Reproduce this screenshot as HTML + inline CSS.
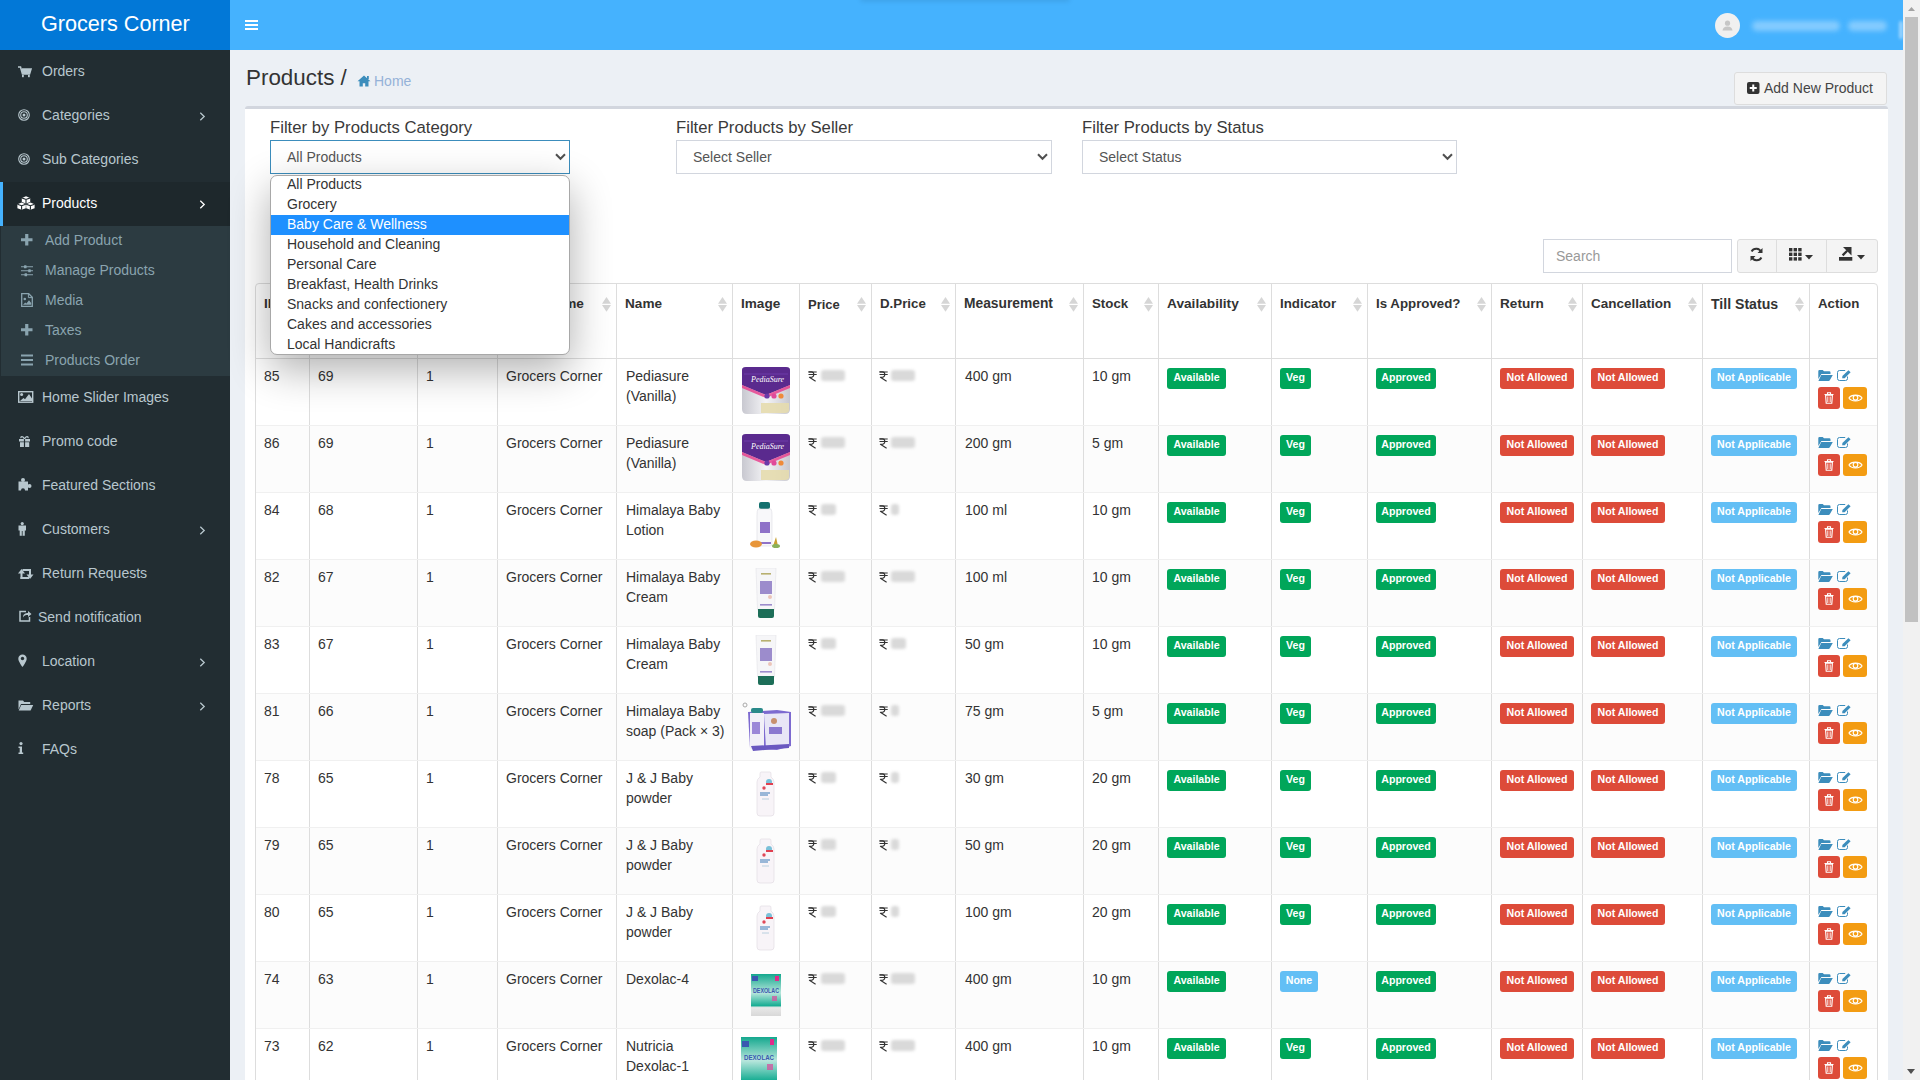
<!DOCTYPE html>
<html><head><meta charset="utf-8"><title>Products</title>
<style>
*{box-sizing:border-box}
html,body{margin:0;padding:0}
body{width:1920px;height:1080px;overflow:hidden;position:relative;background:#ecf0f5;font-family:"Liberation Sans",sans-serif;}
.t{position:absolute;white-space:nowrap}
.r{position:absolute;display:block}
</style></head>
<body>
<div class="r" style="left:0px;top:0px;width:230px;height:50px;background:#0278d7;"></div>
<div class="t" style="left:41px;top:13.32px;font-size:21.6px;line-height:21.6px;color:#fff;font-weight:normal;">Grocers Corner</div>
<div class="r" style="left:230px;top:0px;width:1673px;height:50px;background:#45b2fe;"></div>
<div class="r" style="left:860px;top:-4px;width:210px;height:6px;background:rgba(0,0,0,.08);border-radius:4px;filter:blur(2px)"></div>
<div class="r" style="left:245px;top:20px;width:13px;height:2px;background:#fff;"></div>
<div class="r" style="left:245px;top:24px;width:13px;height:2px;background:#fff;"></div>
<div class="r" style="left:245px;top:28px;width:13px;height:2px;background:#fff;"></div>
<div class="r" style="left:1715px;top:13px;width:25px;height:25px;background:#f0f0f0;border-radius:50%"></div>
<svg class="r" style="left:1721px;top:19px;" width="13" height="13" viewBox="0 0 13 13"><circle cx="6.5" cy="4.2" r="2.6" fill="#c6c6c6"/><path d="M1.5 11.5 Q2 7.6 6.5 7.6 Q11 7.6 11.5 11.5Z" fill="#c6c6c6"/></svg>
<div class="r" style="left:1752px;top:21px;width:88px;height:10px;background:#8fd0ff;border-radius:5px;filter:blur(2.5px);opacity:.85"></div>
<div class="r" style="left:1848px;top:21px;width:39px;height:10px;background:#8fd0ff;border-radius:5px;filter:blur(2.5px);opacity:.85"></div>
<div class="r" style="left:0px;top:50px;width:230px;height:1030px;background:#222d32;"></div>
<svg class="r" style="left:18px;top:66px;" width="14" height="12" viewBox="0 0 14 12"><path d="M0 1h2.5l2 7h7l1.5-5H4" fill="none" stroke="#b8c7ce" stroke-width="1.6"/><path d="M3.5 3h9.5l-1.5 5h-7z" fill="#b8c7ce"/><rect x="4" y="9" width="1.8" height="2.2" fill="#b8c7ce"/><rect x="10" y="9" width="1.8" height="2.2" fill="#b8c7ce"/></svg>
<div class="t" style="left:42px;top:64.15px;font-size:14px;line-height:14px;color:#b8c7ce;font-weight:normal;">Orders</div>
<svg class="r" style="left:18px;top:109px;" width="12" height="12" viewBox="0 0 12 12"><circle cx="6" cy="6" r="5.3" fill="none" stroke="#b8c7ce" stroke-width="1.1"/><circle cx="6" cy="6" r="3.3" fill="none" stroke="#b8c7ce" stroke-width="1.1"/><circle cx="6" cy="6" r="1.5" fill="#b8c7ce"/></svg>
<div class="t" style="left:42px;top:108.15px;font-size:14px;line-height:14px;color:#b8c7ce;font-weight:normal;">Categories</div>
<svg class="r" style="left:199px;top:112px;" width="7" height="9" viewBox="0 0 7 9"><path d="M1.3 0.8 L5.2 4.5 L1.3 8.2" stroke="#b8c7ce" stroke-width="1.3" fill="none"/></svg>
<svg class="r" style="left:18px;top:153px;" width="12" height="12" viewBox="0 0 12 12"><circle cx="6" cy="6" r="5.3" fill="none" stroke="#b8c7ce" stroke-width="1.1"/><circle cx="6" cy="6" r="3.3" fill="none" stroke="#b8c7ce" stroke-width="1.1"/><circle cx="6" cy="6" r="1.5" fill="#b8c7ce"/></svg>
<div class="t" style="left:42px;top:152.15px;font-size:14px;line-height:14px;color:#b8c7ce;font-weight:normal;">Sub Categories</div>
<div class="r" style="left:0px;top:182px;width:230px;height:44px;background:#1e282c;"></div>
<div class="r" style="left:0px;top:182px;width:3px;height:44px;background:#45b2fe;"></div>
<svg class="r" style="left:17px;top:196px;" width="18" height="14" viewBox="0 0 18 14"><path d="M9 0.3L13.2 1.8840000000000001L13.2 5.916L9 7.5L4.8 5.916L4.8 1.8840000000000001Z" fill="#fff"/><path d="M4.6 6.6L8.8 8.184L8.8 12.216000000000001L4.6 13.8L0.39999999999999947 12.216000000000001L0.39999999999999947 8.184Z" fill="#fff"/><path d="M13.4 6.6L17.6 8.184L17.6 12.216000000000001L13.4 13.8L9.2 12.216000000000001L9.2 8.184Z" fill="#fff"/><path d="M4.8 1.8840000000000001L9 3.468L13.2 1.8840000000000001M9 3.468L9 7.5" stroke="#1e282c" stroke-width="1.1" fill="none"/><path d="M0.39999999999999947 8.184L4.6 9.768L8.8 8.184M4.6 9.768L4.6 13.8" stroke="#1e282c" stroke-width="1.1" fill="none"/><path d="M9.2 8.184L13.4 9.768L17.6 8.184M13.4 9.768L13.4 13.8" stroke="#1e282c" stroke-width="1.1" fill="none"/></svg>
<div class="t" style="left:42px;top:196.15px;font-size:14px;line-height:14px;color:#fff;font-weight:normal;">Products</div>
<svg class="r" style="left:199px;top:200px;" width="7" height="9" viewBox="0 0 7 9"><path d="M1.3 0.8 L5.2 4.5 L1.3 8.2" stroke="#fff" stroke-width="1.3" fill="none"/></svg>
<div class="r" style="left:1px;top:226px;width:229px;height:150px;background:#2c3b41;"></div>
<svg class="r" style="left:21px;top:234px;" width="12" height="12" viewBox="0 0 12 12"><path d="M5.75 0v11.5M0 5.75h11.5" stroke="#8aa4af" stroke-width="3.2"/></svg>
<div class="t" style="left:45px;top:233.15px;font-size:14px;line-height:14px;color:#8aa4af;font-weight:normal;">Add Product</div>
<svg class="r" style="left:21px;top:265px;" width="12" height="12" viewBox="0 0 12 12"><path d="M0 1.8h12M0 5.8h12M0 9.8h12" stroke="#8aa4af" stroke-width="1.1"/><rect x="3" y="0.3" width="2.6" height="3" rx=".6" fill="#8aa4af"/><rect x="7.2" y="4.3" width="2.6" height="3" rx=".6" fill="#8aa4af"/><rect x="3.5" y="8.3" width="2.6" height="3" rx=".6" fill="#8aa4af"/></svg>
<div class="t" style="left:45px;top:263.15px;font-size:14px;line-height:14px;color:#8aa4af;font-weight:normal;">Manage Products</div>
<svg class="r" style="left:21px;top:293px;" width="12" height="14" viewBox="0 0 12 14"><path d="M0.7 0.7h7l3.6 3.6v9.2H0.7z" fill="none" stroke="#8aa4af" stroke-width="1.3"/><path d="M7.4 0.7v3.9h3.9" fill="none" stroke="#8aa4af" stroke-width="1"/><circle cx="3.8" cy="6" r="1.3" fill="#8aa4af"/><path d="M2 11.8l2.2-2.4 1.2 1 2.6-3.2 2.2 2.8v1.8z" fill="#8aa4af"/></svg>
<div class="t" style="left:45px;top:293.15px;font-size:14px;line-height:14px;color:#8aa4af;font-weight:normal;">Media</div>
<svg class="r" style="left:21px;top:324px;" width="12" height="12" viewBox="0 0 12 12"><path d="M5.75 0v11.5M0 5.75h11.5" stroke="#8aa4af" stroke-width="3.2"/></svg>
<div class="t" style="left:45px;top:323.15px;font-size:14px;line-height:14px;color:#8aa4af;font-weight:normal;">Taxes</div>
<svg class="r" style="left:21px;top:354px;" width="12" height="12" viewBox="0 0 12 12"><path d="M0 1.5h12M0 6h12M0 10.5h12" stroke="#8aa4af" stroke-width="1.9"/></svg>
<div class="t" style="left:45px;top:353.15px;font-size:14px;line-height:14px;color:#8aa4af;font-weight:normal;">Products Order</div>
<svg class="r" style="left:18px;top:391px;" width="16" height="12" viewBox="0 0 16 12"><rect x="0.7" y="0.7" width="14" height="10.5" fill="none" stroke="#b8c7ce" stroke-width="1.4"/><circle cx="3.6" cy="3.4" r="1.5" fill="#b8c7ce"/><path d="M2 10l3.5-3 1.5 1.2 4-5.2 3 4.5V10z" fill="#b8c7ce"/></svg>
<div class="t" style="left:42px;top:390.15px;font-size:14px;line-height:14px;color:#b8c7ce;font-weight:normal;">Home Slider Images</div>
<svg class="r" style="left:18px;top:435px;" width="13" height="13" viewBox="0 0 13 13"><path d="M1 4h11v2.5H1zM2 7.2h9.2V12H2z" fill="#b8c7ce"/><path d="M6.5 4v8" stroke="#222d32" stroke-width="1.2"/><path d="M6.5 4C5 1 2.5 1 3 3.2M6.5 4C8 1 10.5 1 10 3.2" stroke="#b8c7ce" stroke-width="1.3" fill="none"/></svg>
<div class="t" style="left:42px;top:434.15px;font-size:14px;line-height:14px;color:#b8c7ce;font-weight:normal;">Promo code</div>
<svg class="r" style="left:18px;top:478px;" width="14" height="13" viewBox="0 0 14 13"><rect x="0.5" y="3.5" width="9.5" height="9" fill="#b8c7ce"/><circle cx="5" cy="2" r="2" fill="#b8c7ce"/><circle cx="11.5" cy="8" r="2" fill="#b8c7ce"/><circle cx="5" cy="12.3" r="2" fill="#222d32"/></svg>
<div class="t" style="left:42px;top:478.15px;font-size:14px;line-height:14px;color:#b8c7ce;font-weight:normal;">Featured Sections</div>
<svg class="r" style="left:18px;top:522px;" width="9" height="14" viewBox="0 0 9 14"><circle cx="4.25" cy="1.6" r="1.6" fill="#b8c7ce"/><path d="M0.5 3.6h7.5v5h-1.2v5.2H1.7V8.6H0.5z" fill="#b8c7ce"/><path d="M4.25 9v4.8" stroke="#222d32" stroke-width=".8"/></svg>
<div class="t" style="left:42px;top:522.15px;font-size:14px;line-height:14px;color:#b8c7ce;font-weight:normal;">Customers</div>
<svg class="r" style="left:199px;top:526px;" width="7" height="9" viewBox="0 0 7 9"><path d="M1.3 0.8 L5.2 4.5 L1.3 8.2" stroke="#b8c7ce" stroke-width="1.3" fill="none"/></svg>
<svg class="r" style="left:18px;top:569px;" width="16" height="10" viewBox="0 0 16 10"><path d="M0 4.5L3.5 0 7 4.5z" fill="#b8c7ce"/><rect x="2.5" y="4" width="2" height="6" fill="#b8c7ce"/><rect x="2.5" y="8" width="8.5" height="2" fill="#b8c7ce"/><rect x="4.5" y="0" width="8.5" height="2" fill="#b8c7ce"/><rect x="11" y="0" width="2" height="6" fill="#b8c7ce"/><path d="M8.5 5.5h7L12 10z" fill="#b8c7ce"/></svg>
<div class="t" style="left:42px;top:566.15px;font-size:14px;line-height:14px;color:#b8c7ce;font-weight:normal;">Return Requests</div>
<svg class="r" style="left:18px;top:609px;" width="14" height="13" viewBox="0 0 14 13"><path d="M8 2.5H2v9.5h9.5V8" fill="none" stroke="#b8c7ce" stroke-width="1.5"/><path d="M5 8.5c0-3.5 2.5-4.5 5-4.5V2l3.5 3-3.5 3V6c-2.5 0-4 .5-5 2.5z" fill="#b8c7ce"/></svg>
<div class="t" style="left:38px;top:610.15px;font-size:14px;line-height:14px;color:#b8c7ce;font-weight:normal;">Send notification</div>
<svg class="r" style="left:18px;top:654px;" width="9" height="14" viewBox="0 0 9 14"><path d="M4.5 0.5a4.2 4.2 0 0 1 4.2 4.2c0 2.8-4.2 8.3-4.2 8.3S0.3 7.5 0.3 4.7A4.2 4.2 0 0 1 4.5 0.5z" fill="#b8c7ce"/><circle cx="4.5" cy="4.5" r="1.7" fill="#222d32"/></svg>
<div class="t" style="left:42px;top:654.15px;font-size:14px;line-height:14px;color:#b8c7ce;font-weight:normal;">Location</div>
<svg class="r" style="left:199px;top:658px;" width="7" height="9" viewBox="0 0 7 9"><path d="M1.3 0.8 L5.2 4.5 L1.3 8.2" stroke="#b8c7ce" stroke-width="1.3" fill="none"/></svg>
<svg class="r" style="left:18px;top:699px;" width="16" height="12" viewBox="0 0 16 12"><path d="M0.5 1.5h4.5l1.2 1.5h6v2H3L0.5 10.5z" fill="#b8c7ce"/><path d="M3.2 6h12l-2.6 5.5H0.7z" fill="#b8c7ce"/></svg>
<div class="t" style="left:42px;top:698.15px;font-size:14px;line-height:14px;color:#b8c7ce;font-weight:normal;">Reports</div>
<svg class="r" style="left:199px;top:702px;" width="7" height="9" viewBox="0 0 7 9"><path d="M1.3 0.8 L5.2 4.5 L1.3 8.2" stroke="#b8c7ce" stroke-width="1.3" fill="none"/></svg>
<svg class="r" style="left:18px;top:742px;" width="6" height="13" viewBox="0 0 6 13"><circle cx="3" cy="1.6" r="1.6" fill="#b8c7ce"/><path d="M0.5 4.5h3.5v6h1.2v1.6H0.5v-1.6h1.2V6.1H0.5z" fill="#b8c7ce"/></svg>
<div class="t" style="left:42px;top:742.15px;font-size:14px;line-height:14px;color:#b8c7ce;font-weight:normal;">FAQs</div>
<div class="t" style="left:246px;top:67.04px;font-size:22.4px;line-height:22.4px;color:#333;font-weight:normal;">Products /</div>
<svg class="r" style="left:357px;top:75px;" width="14" height="12" viewBox="0 0 14 12"><path d="M7 0.5L0.5 6.3h2v5.2h3.3V8.3h2.4v3.2h3.3V6.3h2z" fill="#3c8dbc"/><rect x="10" y="1" width="1.8" height="3" fill="#3c8dbc"/></svg>
<div class="t" style="left:374px;top:74.15px;font-size:14px;line-height:14px;color:#95b2d8;font-weight:normal;">Home</div>
<div class="r" style="left:1734px;top:72px;width:153px;height:33px;background:#f4f4f4;border:1px solid #ddd;border-radius:3px"></div>
<svg class="r" style="left:1747px;top:82px;" width="13" height="12" viewBox="0 0 13 12"><rect x="0" y="0" width="12.5" height="12" rx="2" fill="#333"/><path d="M6.25 2.5v7M2.75 6h7" stroke="#fff" stroke-width="2"/></svg>
<div class="t" style="left:1764px;top:81.15px;font-size:14px;line-height:14px;color:#444;font-weight:normal;">Add New Product</div>
<div class="r" style="left:245px;top:106px;width:1643px;height:974px;background:#fff;border-top:3px solid #d2d6de;border-radius:3px 3px 0 0"></div>
<div class="t" style="left:270px;top:119.86px;font-size:16.7px;line-height:16.7px;color:#3a3a3a;font-weight:normal;">Filter by Products Category</div>
<div class="t" style="left:676px;top:119.86px;font-size:16.7px;line-height:16.7px;color:#3a3a3a;font-weight:normal;">Filter Products by Seller</div>
<div class="t" style="left:1082px;top:119.86px;font-size:16.7px;line-height:16.7px;color:#3a3a3a;font-weight:normal;">Filter Products by Status</div>
<div class="r" style="left:270px;top:140px;width:300px;height:34px;background:#fff;border:1px solid #3c8dbc"></div>
<div class="t" style="left:287px;top:150.15px;font-size:14px;line-height:14px;color:#555;font-weight:normal;">All Products</div>
<svg class="r" style="left:554.5px;top:153px;" width="11" height="8" viewBox="0 0 11 8"><path d="M1 1.2L5.5 5.8 10 1.2" stroke="#505050" stroke-width="2" fill="none"/></svg>
<div class="r" style="left:676px;top:140px;width:376px;height:34px;background:#fff;border:1px solid #d2d6de"></div>
<div class="t" style="left:693px;top:150.15px;font-size:14px;line-height:14px;color:#555;font-weight:normal;">Select Seller</div>
<svg class="r" style="left:1037px;top:153px;" width="11" height="8" viewBox="0 0 11 8"><path d="M1 1.2L5.5 5.8 10 1.2" stroke="#505050" stroke-width="2" fill="none"/></svg>
<div class="r" style="left:1082px;top:140px;width:375px;height:34px;background:#fff;border:1px solid #d2d6de"></div>
<div class="t" style="left:1099px;top:150.15px;font-size:14px;line-height:14px;color:#555;font-weight:normal;">Select Status</div>
<svg class="r" style="left:1442px;top:153px;" width="11" height="8" viewBox="0 0 11 8"><path d="M1 1.2L5.5 5.8 10 1.2" stroke="#505050" stroke-width="2" fill="none"/></svg>
<div class="r" style="left:1543px;top:239px;width:189px;height:34px;background:#fff;border:1px solid #d2d6de"></div>
<div class="t" style="left:1556px;top:249.15px;font-size:14px;line-height:14px;color:#999;font-weight:normal;">Search</div>
<div class="r" style="left:1737px;top:239px;width:141px;height:34px;background:#f4f4f4;border:1px solid #ddd;border-radius:3px"></div>
<div class="r" style="left:1776px;top:240px;width:1px;height:32px;background:#ddd;"></div>
<div class="r" style="left:1826px;top:240px;width:1px;height:32px;background:#ddd;"></div>
<svg class="r" style="left:1749px;top:247px;" width="15" height="15" viewBox="0 0 15 15"><path d="M12.2 5.2A5.3 5.3 0 0 0 2.6 4.5M2.8 9.8A5.3 5.3 0 0 0 12.4 10.5" stroke="#333" stroke-width="2" fill="none"/><path d="M13.5 1v5h-5zM1.5 14V9h5z" fill="#333"/></svg>
<svg class="r" style="left:1789px;top:248px;" width="13" height="13" viewBox="0 0 13 13"><rect x="0" y="0" width="3.4" height="3.4" fill="#333"/><rect x="0" y="4.6" width="3.4" height="3.4" fill="#333"/><rect x="0" y="9.2" width="3.4" height="3.4" fill="#333"/><rect x="4.6" y="0" width="3.4" height="3.4" fill="#333"/><rect x="4.6" y="4.6" width="3.4" height="3.4" fill="#333"/><rect x="4.6" y="9.2" width="3.4" height="3.4" fill="#333"/><rect x="9.2" y="0" width="3.4" height="3.4" fill="#333"/><rect x="9.2" y="4.6" width="3.4" height="3.4" fill="#333"/><rect x="9.2" y="9.2" width="3.4" height="3.4" fill="#333"/></svg>
<svg class="r" style="left:1805px;top:255px;" width="8" height="5" viewBox="0 0 8 5"><path d="M0 0h8L4 4.5z" fill="#333"/></svg>
<svg class="r" style="left:1839px;top:246px;" width="14" height="15" viewBox="0 0 14 15"><rect x="0" y="11" width="13.3" height="3.7" fill="#333"/><path d="M3.6 9.4L8.2 4.8" stroke="#333" stroke-width="2.3"/><path d="M4 1h8.5v8.5z" fill="#333"/></svg>
<svg class="r" style="left:1857px;top:255px;" width="8" height="5" viewBox="0 0 8 5"><path d="M0 0h8L4 4.5z" fill="#333"/></svg>
<div class="r" style="left:255px;top:283px;width:1623px;height:807px;background:#fff;border:1px solid #ddd;border-radius:4px"></div>
<div class="r" style="left:309px;top:284px;width:1px;height:797px;background:#ddd;"></div>
<div class="r" style="left:417px;top:284px;width:1px;height:797px;background:#ddd;"></div>
<div class="r" style="left:497px;top:284px;width:1px;height:797px;background:#ddd;"></div>
<div class="r" style="left:616px;top:284px;width:1px;height:797px;background:#ddd;"></div>
<div class="r" style="left:732px;top:284px;width:1px;height:797px;background:#ddd;"></div>
<div class="r" style="left:799px;top:284px;width:1px;height:797px;background:#ddd;"></div>
<div class="r" style="left:871px;top:284px;width:1px;height:797px;background:#ddd;"></div>
<div class="r" style="left:955px;top:284px;width:1px;height:797px;background:#ddd;"></div>
<div class="r" style="left:1083px;top:284px;width:1px;height:797px;background:#ddd;"></div>
<div class="r" style="left:1158px;top:284px;width:1px;height:797px;background:#ddd;"></div>
<div class="r" style="left:1271px;top:284px;width:1px;height:797px;background:#ddd;"></div>
<div class="r" style="left:1367px;top:284px;width:1px;height:797px;background:#ddd;"></div>
<div class="r" style="left:1491px;top:284px;width:1px;height:797px;background:#ddd;"></div>
<div class="r" style="left:1582px;top:284px;width:1px;height:797px;background:#ddd;"></div>
<div class="r" style="left:1702px;top:284px;width:1px;height:797px;background:#ddd;"></div>
<div class="r" style="left:1809px;top:284px;width:1px;height:797px;background:#ddd;"></div>
<div class="r" style="left:256px;top:358px;width:1621px;height:1px;background:#ddd;"></div>
<div class="r" style="left:256px;top:426px;width:1621px;height:66px;background:#fcfcfc;"></div>
<div class="r" style="left:256px;top:560px;width:1621px;height:66px;background:#fcfcfc;"></div>
<div class="r" style="left:256px;top:694px;width:1621px;height:66px;background:#fcfcfc;"></div>
<div class="r" style="left:256px;top:828px;width:1621px;height:66px;background:#fcfcfc;"></div>
<div class="r" style="left:256px;top:962px;width:1621px;height:66px;background:#fcfcfc;"></div>
<div class="r" style="left:309px;top:358px;width:1px;height:722px;background:#ddd;"></div>
<div class="r" style="left:417px;top:358px;width:1px;height:722px;background:#ddd;"></div>
<div class="r" style="left:497px;top:358px;width:1px;height:722px;background:#ddd;"></div>
<div class="r" style="left:616px;top:358px;width:1px;height:722px;background:#ddd;"></div>
<div class="r" style="left:732px;top:358px;width:1px;height:722px;background:#ddd;"></div>
<div class="r" style="left:799px;top:358px;width:1px;height:722px;background:#ddd;"></div>
<div class="r" style="left:871px;top:358px;width:1px;height:722px;background:#ddd;"></div>
<div class="r" style="left:955px;top:358px;width:1px;height:722px;background:#ddd;"></div>
<div class="r" style="left:1083px;top:358px;width:1px;height:722px;background:#ddd;"></div>
<div class="r" style="left:1158px;top:358px;width:1px;height:722px;background:#ddd;"></div>
<div class="r" style="left:1271px;top:358px;width:1px;height:722px;background:#ddd;"></div>
<div class="r" style="left:1367px;top:358px;width:1px;height:722px;background:#ddd;"></div>
<div class="r" style="left:1491px;top:358px;width:1px;height:722px;background:#ddd;"></div>
<div class="r" style="left:1582px;top:358px;width:1px;height:722px;background:#ddd;"></div>
<div class="r" style="left:1702px;top:358px;width:1px;height:722px;background:#ddd;"></div>
<div class="r" style="left:1809px;top:358px;width:1px;height:722px;background:#ddd;"></div>
<div class="r" style="left:256px;top:425px;width:1621px;height:1px;background:#f0f0f0;"></div>
<div class="r" style="left:256px;top:492px;width:1621px;height:1px;background:#f0f0f0;"></div>
<div class="r" style="left:256px;top:559px;width:1621px;height:1px;background:#f0f0f0;"></div>
<div class="r" style="left:256px;top:626px;width:1621px;height:1px;background:#f0f0f0;"></div>
<div class="r" style="left:256px;top:693px;width:1621px;height:1px;background:#f0f0f0;"></div>
<div class="r" style="left:256px;top:760px;width:1621px;height:1px;background:#f0f0f0;"></div>
<div class="r" style="left:256px;top:827px;width:1621px;height:1px;background:#f0f0f0;"></div>
<div class="r" style="left:256px;top:894px;width:1621px;height:1px;background:#f0f0f0;"></div>
<div class="r" style="left:256px;top:961px;width:1621px;height:1px;background:#f0f0f0;"></div>
<div class="r" style="left:256px;top:1028px;width:1621px;height:1px;background:#f0f0f0;"></div>
<div class="t" style="left:264px;top:297.09px;font-size:13.6px;line-height:13.6px;color:#333;font-weight:bold;">ID</div>
<svg class="r" style="left:295px;top:297px;" width="9" height="15" viewBox="0 0 9 15"><path d="M4.5 0L9 6.8H0z" fill="#d6d6d6"/><path d="M0 8h9L4.5 14.8z" fill="#d6d6d6"/></svg>
<div class="t" style="left:318px;top:297.09px;font-size:13.6px;line-height:13.6px;color:#333;font-weight:bold;">Product ID</div>
<svg class="r" style="left:403px;top:297px;" width="9" height="15" viewBox="0 0 9 15"><path d="M4.5 0L9 6.8H0z" fill="#d6d6d6"/><path d="M0 8h9L4.5 14.8z" fill="#d6d6d6"/></svg>
<div class="t" style="left:426px;top:297.09px;font-size:13.6px;line-height:13.6px;color:#333;font-weight:bold;">Seller ID</div>
<svg class="r" style="left:483px;top:297px;" width="9" height="15" viewBox="0 0 9 15"><path d="M4.5 0L9 6.8H0z" fill="#d6d6d6"/><path d="M0 8h9L4.5 14.8z" fill="#d6d6d6"/></svg>
<div class="t" style="left:506px;top:297.09px;font-size:13.6px;line-height:13.6px;color:#333;font-weight:bold;">Seller Name</div>
<svg class="r" style="left:602px;top:297px;" width="9" height="15" viewBox="0 0 9 15"><path d="M4.5 0L9 6.8H0z" fill="#d6d6d6"/><path d="M0 8h9L4.5 14.8z" fill="#d6d6d6"/></svg>
<div class="t" style="left:625px;top:297.09px;font-size:13.6px;line-height:13.6px;color:#333;font-weight:bold;">Name</div>
<svg class="r" style="left:718px;top:297px;" width="9" height="15" viewBox="0 0 9 15"><path d="M4.5 0L9 6.8H0z" fill="#d6d6d6"/><path d="M0 8h9L4.5 14.8z" fill="#d6d6d6"/></svg>
<div class="t" style="left:741px;top:297.09px;font-size:13.6px;line-height:13.6px;color:#333;font-weight:bold;">Image</div>
<div class="t" style="left:808px;top:297.60px;font-size:13.0px;line-height:13.0px;color:#333;font-weight:bold;">Price</div>
<svg class="r" style="left:857px;top:297px;" width="9" height="15" viewBox="0 0 9 15"><path d="M4.5 0L9 6.8H0z" fill="#d6d6d6"/><path d="M0 8h9L4.5 14.8z" fill="#d6d6d6"/></svg>
<div class="t" style="left:880px;top:297.34px;font-size:13.3px;line-height:13.3px;color:#333;font-weight:bold;">D.Price</div>
<svg class="r" style="left:941px;top:297px;" width="9" height="15" viewBox="0 0 9 15"><path d="M4.5 0L9 6.8H0z" fill="#d6d6d6"/><path d="M0 8h9L4.5 14.8z" fill="#d6d6d6"/></svg>
<div class="t" style="left:964px;top:296.92px;font-size:13.8px;line-height:13.8px;color:#333;font-weight:bold;">Measurement</div>
<svg class="r" style="left:1069px;top:297px;" width="9" height="15" viewBox="0 0 9 15"><path d="M4.5 0L9 6.8H0z" fill="#d6d6d6"/><path d="M0 8h9L4.5 14.8z" fill="#d6d6d6"/></svg>
<div class="t" style="left:1092px;top:297.34px;font-size:13.3px;line-height:13.3px;color:#333;font-weight:bold;">Stock</div>
<svg class="r" style="left:1144px;top:297px;" width="9" height="15" viewBox="0 0 9 15"><path d="M4.5 0L9 6.8H0z" fill="#d6d6d6"/><path d="M0 8h9L4.5 14.8z" fill="#d6d6d6"/></svg>
<div class="t" style="left:1167px;top:297.00px;font-size:13.7px;line-height:13.7px;color:#333;font-weight:bold;">Availability</div>
<svg class="r" style="left:1257px;top:297px;" width="9" height="15" viewBox="0 0 9 15"><path d="M4.5 0L9 6.8H0z" fill="#d6d6d6"/><path d="M0 8h9L4.5 14.8z" fill="#d6d6d6"/></svg>
<div class="t" style="left:1280px;top:297.34px;font-size:13.3px;line-height:13.3px;color:#333;font-weight:bold;">Indicator</div>
<svg class="r" style="left:1353px;top:297px;" width="9" height="15" viewBox="0 0 9 15"><path d="M4.5 0L9 6.8H0z" fill="#d6d6d6"/><path d="M0 8h9L4.5 14.8z" fill="#d6d6d6"/></svg>
<div class="t" style="left:1376px;top:297.34px;font-size:13.3px;line-height:13.3px;color:#333;font-weight:bold;">Is Approved?</div>
<svg class="r" style="left:1477px;top:297px;" width="9" height="15" viewBox="0 0 9 15"><path d="M4.5 0L9 6.8H0z" fill="#d6d6d6"/><path d="M0 8h9L4.5 14.8z" fill="#d6d6d6"/></svg>
<div class="t" style="left:1500px;top:297.09px;font-size:13.6px;line-height:13.6px;color:#333;font-weight:bold;">Return</div>
<svg class="r" style="left:1568px;top:297px;" width="9" height="15" viewBox="0 0 9 15"><path d="M4.5 0L9 6.8H0z" fill="#d6d6d6"/><path d="M0 8h9L4.5 14.8z" fill="#d6d6d6"/></svg>
<div class="t" style="left:1591px;top:297.17px;font-size:13.5px;line-height:13.5px;color:#333;font-weight:bold;">Cancellation</div>
<svg class="r" style="left:1688px;top:297px;" width="9" height="15" viewBox="0 0 9 15"><path d="M4.5 0L9 6.8H0z" fill="#d6d6d6"/><path d="M0 8h9L4.5 14.8z" fill="#d6d6d6"/></svg>
<div class="t" style="left:1711px;top:296.66px;font-size:14.1px;line-height:14.1px;color:#333;font-weight:bold;">Till Status</div>
<svg class="r" style="left:1795px;top:297px;" width="9" height="15" viewBox="0 0 9 15"><path d="M4.5 0L9 6.8H0z" fill="#d6d6d6"/><path d="M0 8h9L4.5 14.8z" fill="#d6d6d6"/></svg>
<div class="t" style="left:1818px;top:297.34px;font-size:13.3px;line-height:13.3px;color:#333;font-weight:bold;">Action</div>
<div class="t" style="left:264px;top:369.15px;font-size:14px;line-height:14px;color:#333;font-weight:normal;">85</div>
<div class="t" style="left:318px;top:369.15px;font-size:14px;line-height:14px;color:#333;font-weight:normal;">69</div>
<div class="t" style="left:426px;top:369.15px;font-size:14px;line-height:14px;color:#333;font-weight:normal;">1</div>
<div class="t" style="left:506px;top:369.15px;font-size:14px;line-height:14px;color:#333;font-weight:normal;">Grocers Corner</div>
<div class="t" style="left:626px;top:369.15px;font-size:14px;line-height:14px;color:#333;font-weight:normal;">Pediasure</div>
<div class="t" style="left:626px;top:389.15px;font-size:14px;line-height:14px;color:#333;font-weight:normal;">(Vanilla)</div>
<svg class="r" style="left:741px;top:367px;" width="50" height="48" viewBox="0 0 50 48"><defs><linearGradient id="pg358" x1="0" y1="0" x2="1" y2="0"><stop offset="0" stop-color="#c8c8d0"/><stop offset=".5" stop-color="#f4f4f6"/><stop offset="1" stop-color="#c8c8d0"/></linearGradient></defs><path d="M1 3Q1 0 5 0H45Q49 0 49 3V42Q49 47 44 47H6Q1 47 1 42Z" fill="url(#pg358)"/><path d="M1 3Q1 0 5 0H45Q49 0 49 3V18L25 28L1 18Z" fill="#5a2a8e"/><path d="M1 18L25 28L49 18V21L25 31L1 21Z" fill="#e8388a" opacity=".8"/><path d="M3 7H47" stroke="#6d3aa8" stroke-width="1"/><text x="10" y="15" font-size="8" font-style="italic" fill="#fff" font-family="Liberation Serif">PediaSure</text><circle cx="26" cy="29" r="2.6" fill="#6a3aa8"/><circle cx="33" cy="29" r="2.6" fill="#e04a9a"/><circle cx="40" cy="29" r="2.6" fill="#ef8a3a"/><path d="M20 36H48V43Q48 46 44 46H20Z" fill="#e6dcae" opacity=".9"/></svg>
<svg class="r" style="left:808px;top:370.5px;" width="9" height="11" viewBox="0 0 9 11"><path d="M0.5 0.9H8.7M0.5 3.4H8.7" stroke="#333" stroke-width="1.05"/><path d="M0.5 0.9H3.4C6.6 0.9 6.6 6.2 3.4 6.2H1.4L7.6 10.3" stroke="#333" stroke-width="1.1" fill="none" stroke-linejoin="round"/></svg>
<div class="r" style="left:821px;top:370px;width:24px;height:11px;background:#d9d9d9;border-radius:3px;filter:blur(1.6px)"></div>
<svg class="r" style="left:879px;top:370.5px;" width="9" height="11" viewBox="0 0 9 11"><path d="M0.5 0.9H8.7M0.5 3.4H8.7" stroke="#333" stroke-width="1.05"/><path d="M0.5 0.9H3.4C6.6 0.9 6.6 6.2 3.4 6.2H1.4L7.6 10.3" stroke="#333" stroke-width="1.1" fill="none" stroke-linejoin="round"/></svg>
<div class="r" style="left:891px;top:370px;width:24px;height:11px;background:#d9d9d9;border-radius:3px;filter:blur(1.6px)"></div>
<div class="t" style="left:965px;top:369.15px;font-size:14px;line-height:14px;color:#333;font-weight:normal;">400 gm</div>
<div class="t" style="left:1092px;top:369.15px;font-size:14px;line-height:14px;color:#333;font-weight:normal;">10 gm</div>
<div class="r" style="left:1167px;top:368px;width:59px;height:21px;background:#00a65a;border-radius:3px;color:#fff;font-weight:bold;font-size:10.6px;line-height:18.5px;text-align:center;white-space:nowrap">Available</div>
<div class="r" style="left:1280px;top:368px;width:31px;height:21px;background:#00a65a;border-radius:3px;color:#fff;font-weight:bold;font-size:10.6px;line-height:18.5px;text-align:center;white-space:nowrap">Veg</div>
<div class="r" style="left:1376px;top:368px;width:60px;height:21px;background:#00a65a;border-radius:3px;color:#fff;font-weight:bold;font-size:10.6px;line-height:18.5px;text-align:center;white-space:nowrap">Approved</div>
<div class="r" style="left:1500px;top:368px;width:74px;height:21px;background:#dd4b39;border-radius:3px;color:#fff;font-weight:bold;font-size:10.6px;line-height:18.5px;text-align:center;white-space:nowrap">Not Allowed</div>
<div class="r" style="left:1591px;top:368px;width:74px;height:21px;background:#dd4b39;border-radius:3px;color:#fff;font-weight:bold;font-size:10.6px;line-height:18.5px;text-align:center;white-space:nowrap">Not Allowed</div>
<div class="r" style="left:1711px;top:368px;width:86px;height:21px;background:#63bff5;border-radius:3px;color:#fff;font-weight:bold;font-size:10.6px;line-height:18.5px;text-align:center;white-space:nowrap">Not Applicable</div>
<svg class="r" style="left:1818px;top:370px;" width="15" height="11" viewBox="0 0 15 11"><path d="M0.3 1.2Q0.3 0 1.5 0h3.2l1.3 1.3h5.3Q12.5 1.3 12.5 2.5v1.6H3.4L0.3 9z" fill="#3c8dbc"/><path d="M3.2 5h11.6l-3 5.2Q11.4 11 10.6 11H0.4z" fill="#3c8dbc"/></svg>
<svg class="r" style="left:1837px;top:369px;" width="15" height="13" viewBox="0 0 15 13"><path d="M8.2 1.5H2.5Q0.5 1.5 0.5 3.5V9.5Q0.5 11.5 2.5 11.5H8.5Q10.5 11.5 10.5 9.5V7.5" fill="none" stroke="#3c8dbc" stroke-width="1"/><path d="M5.2 9.2L5.4 7L11.4 1.2L13.6 3.3L7.6 9.2z" fill="#3c8dbc"/></svg>
<div class="r" style="left:1818px;top:387px;width:22px;height:22px;background:#dd4b39;border-radius:3px"></div>
<svg class="r" style="left:1824px;top:392px;" width="10" height="12" viewBox="0 0 10 12"><path d="M0.5 2.5h9M3.5 2.5V0.8h3v1.7" stroke="#fff" stroke-width="1.1" fill="none"/><path d="M1.6 3.3h6.8l-0.6 8H2.2z" fill="none" stroke="#fff" stroke-width="1.1"/><path d="M3.8 4.5v5.5M6.2 4.5v5.5" stroke="#fff" stroke-width="0.9"/></svg>
<div class="r" style="left:1843px;top:387px;width:24px;height:22px;background:#f39c12;border-radius:3px"></div>
<svg class="r" style="left:1848px;top:393px;" width="15" height="10" viewBox="0 0 15 10"><path d="M1 5C3.2 1.2 11.8 1.2 14 5 11.8 8.8 3.2 8.8 1 5z" fill="none" stroke="#fff" stroke-width="1.2"/><circle cx="7.5" cy="4.8" r="2.3" fill="none" stroke="#fff" stroke-width="1.1"/></svg>
<div class="t" style="left:264px;top:436.15px;font-size:14px;line-height:14px;color:#333;font-weight:normal;">86</div>
<div class="t" style="left:318px;top:436.15px;font-size:14px;line-height:14px;color:#333;font-weight:normal;">69</div>
<div class="t" style="left:426px;top:436.15px;font-size:14px;line-height:14px;color:#333;font-weight:normal;">1</div>
<div class="t" style="left:506px;top:436.15px;font-size:14px;line-height:14px;color:#333;font-weight:normal;">Grocers Corner</div>
<div class="t" style="left:626px;top:436.15px;font-size:14px;line-height:14px;color:#333;font-weight:normal;">Pediasure</div>
<div class="t" style="left:626px;top:456.15px;font-size:14px;line-height:14px;color:#333;font-weight:normal;">(Vanilla)</div>
<svg class="r" style="left:741px;top:434px;" width="50" height="48" viewBox="0 0 50 48"><defs><linearGradient id="pg425" x1="0" y1="0" x2="1" y2="0"><stop offset="0" stop-color="#c8c8d0"/><stop offset=".5" stop-color="#f4f4f6"/><stop offset="1" stop-color="#c8c8d0"/></linearGradient></defs><path d="M1 3Q1 0 5 0H45Q49 0 49 3V42Q49 47 44 47H6Q1 47 1 42Z" fill="url(#pg425)"/><path d="M1 3Q1 0 5 0H45Q49 0 49 3V18L25 28L1 18Z" fill="#5a2a8e"/><path d="M1 18L25 28L49 18V21L25 31L1 21Z" fill="#e8388a" opacity=".8"/><path d="M3 7H47" stroke="#6d3aa8" stroke-width="1"/><text x="10" y="15" font-size="8" font-style="italic" fill="#fff" font-family="Liberation Serif">PediaSure</text><circle cx="26" cy="29" r="2.6" fill="#6a3aa8"/><circle cx="33" cy="29" r="2.6" fill="#e04a9a"/><circle cx="40" cy="29" r="2.6" fill="#ef8a3a"/><path d="M20 36H48V43Q48 46 44 46H20Z" fill="#e6dcae" opacity=".9"/></svg>
<svg class="r" style="left:808px;top:437.5px;" width="9" height="11" viewBox="0 0 9 11"><path d="M0.5 0.9H8.7M0.5 3.4H8.7" stroke="#333" stroke-width="1.05"/><path d="M0.5 0.9H3.4C6.6 0.9 6.6 6.2 3.4 6.2H1.4L7.6 10.3" stroke="#333" stroke-width="1.1" fill="none" stroke-linejoin="round"/></svg>
<div class="r" style="left:821px;top:437px;width:24px;height:11px;background:#d9d9d9;border-radius:3px;filter:blur(1.6px)"></div>
<svg class="r" style="left:879px;top:437.5px;" width="9" height="11" viewBox="0 0 9 11"><path d="M0.5 0.9H8.7M0.5 3.4H8.7" stroke="#333" stroke-width="1.05"/><path d="M0.5 0.9H3.4C6.6 0.9 6.6 6.2 3.4 6.2H1.4L7.6 10.3" stroke="#333" stroke-width="1.1" fill="none" stroke-linejoin="round"/></svg>
<div class="r" style="left:891px;top:437px;width:24px;height:11px;background:#d9d9d9;border-radius:3px;filter:blur(1.6px)"></div>
<div class="t" style="left:965px;top:436.15px;font-size:14px;line-height:14px;color:#333;font-weight:normal;">200 gm</div>
<div class="t" style="left:1092px;top:436.15px;font-size:14px;line-height:14px;color:#333;font-weight:normal;">5 gm</div>
<div class="r" style="left:1167px;top:435px;width:59px;height:21px;background:#00a65a;border-radius:3px;color:#fff;font-weight:bold;font-size:10.6px;line-height:18.5px;text-align:center;white-space:nowrap">Available</div>
<div class="r" style="left:1280px;top:435px;width:31px;height:21px;background:#00a65a;border-radius:3px;color:#fff;font-weight:bold;font-size:10.6px;line-height:18.5px;text-align:center;white-space:nowrap">Veg</div>
<div class="r" style="left:1376px;top:435px;width:60px;height:21px;background:#00a65a;border-radius:3px;color:#fff;font-weight:bold;font-size:10.6px;line-height:18.5px;text-align:center;white-space:nowrap">Approved</div>
<div class="r" style="left:1500px;top:435px;width:74px;height:21px;background:#dd4b39;border-radius:3px;color:#fff;font-weight:bold;font-size:10.6px;line-height:18.5px;text-align:center;white-space:nowrap">Not Allowed</div>
<div class="r" style="left:1591px;top:435px;width:74px;height:21px;background:#dd4b39;border-radius:3px;color:#fff;font-weight:bold;font-size:10.6px;line-height:18.5px;text-align:center;white-space:nowrap">Not Allowed</div>
<div class="r" style="left:1711px;top:435px;width:86px;height:21px;background:#63bff5;border-radius:3px;color:#fff;font-weight:bold;font-size:10.6px;line-height:18.5px;text-align:center;white-space:nowrap">Not Applicable</div>
<svg class="r" style="left:1818px;top:437px;" width="15" height="11" viewBox="0 0 15 11"><path d="M0.3 1.2Q0.3 0 1.5 0h3.2l1.3 1.3h5.3Q12.5 1.3 12.5 2.5v1.6H3.4L0.3 9z" fill="#3c8dbc"/><path d="M3.2 5h11.6l-3 5.2Q11.4 11 10.6 11H0.4z" fill="#3c8dbc"/></svg>
<svg class="r" style="left:1837px;top:436px;" width="15" height="13" viewBox="0 0 15 13"><path d="M8.2 1.5H2.5Q0.5 1.5 0.5 3.5V9.5Q0.5 11.5 2.5 11.5H8.5Q10.5 11.5 10.5 9.5V7.5" fill="none" stroke="#3c8dbc" stroke-width="1"/><path d="M5.2 9.2L5.4 7L11.4 1.2L13.6 3.3L7.6 9.2z" fill="#3c8dbc"/></svg>
<div class="r" style="left:1818px;top:454px;width:22px;height:22px;background:#dd4b39;border-radius:3px"></div>
<svg class="r" style="left:1824px;top:459px;" width="10" height="12" viewBox="0 0 10 12"><path d="M0.5 2.5h9M3.5 2.5V0.8h3v1.7" stroke="#fff" stroke-width="1.1" fill="none"/><path d="M1.6 3.3h6.8l-0.6 8H2.2z" fill="none" stroke="#fff" stroke-width="1.1"/><path d="M3.8 4.5v5.5M6.2 4.5v5.5" stroke="#fff" stroke-width="0.9"/></svg>
<div class="r" style="left:1843px;top:454px;width:24px;height:22px;background:#f39c12;border-radius:3px"></div>
<svg class="r" style="left:1848px;top:460px;" width="15" height="10" viewBox="0 0 15 10"><path d="M1 5C3.2 1.2 11.8 1.2 14 5 11.8 8.8 3.2 8.8 1 5z" fill="none" stroke="#fff" stroke-width="1.2"/><circle cx="7.5" cy="4.8" r="2.3" fill="none" stroke="#fff" stroke-width="1.1"/></svg>
<div class="t" style="left:264px;top:503.15px;font-size:14px;line-height:14px;color:#333;font-weight:normal;">84</div>
<div class="t" style="left:318px;top:503.15px;font-size:14px;line-height:14px;color:#333;font-weight:normal;">68</div>
<div class="t" style="left:426px;top:503.15px;font-size:14px;line-height:14px;color:#333;font-weight:normal;">1</div>
<div class="t" style="left:506px;top:503.15px;font-size:14px;line-height:14px;color:#333;font-weight:normal;">Grocers Corner</div>
<div class="t" style="left:626px;top:503.15px;font-size:14px;line-height:14px;color:#333;font-weight:normal;">Himalaya Baby</div>
<div class="t" style="left:626px;top:523.15px;font-size:14px;line-height:14px;color:#333;font-weight:normal;">Lotion</div>
<svg class="r" style="left:749px;top:501px;" width="32" height="48" viewBox="0 0 32 48"><rect x="10" y="1" width="11" height="7" rx="2" fill="#13706e"/><path d="M9 8H22Q23 10 23 14V43Q23 45 21 45H10Q8 45 8 43V14Q8 10 9 8Z" fill="#f8f8fa" stroke="#dcdce2" stroke-width=".6"/><rect x="11" y="21" width="10" height="11" fill="#8f72c8"/><rect x="10" y="41" width="12" height="2" fill="#8f72c8"/><ellipse cx="7" cy="43" rx="6" ry="3.5" fill="#e8963a"/><path d="M24 45L27 36L29 45Z" fill="#c8a030"/><ellipse cx="27" cy="45" rx="4" ry="2" fill="#8ab05a"/></svg>
<svg class="r" style="left:808px;top:504.5px;" width="9" height="11" viewBox="0 0 9 11"><path d="M0.5 0.9H8.7M0.5 3.4H8.7" stroke="#333" stroke-width="1.05"/><path d="M0.5 0.9H3.4C6.6 0.9 6.6 6.2 3.4 6.2H1.4L7.6 10.3" stroke="#333" stroke-width="1.1" fill="none" stroke-linejoin="round"/></svg>
<div class="r" style="left:821px;top:504px;width:15px;height:11px;background:#d9d9d9;border-radius:3px;filter:blur(1.6px)"></div>
<svg class="r" style="left:879px;top:504.5px;" width="9" height="11" viewBox="0 0 9 11"><path d="M0.5 0.9H8.7M0.5 3.4H8.7" stroke="#333" stroke-width="1.05"/><path d="M0.5 0.9H3.4C6.6 0.9 6.6 6.2 3.4 6.2H1.4L7.6 10.3" stroke="#333" stroke-width="1.1" fill="none" stroke-linejoin="round"/></svg>
<div class="r" style="left:891px;top:504px;width:8px;height:11px;background:#d9d9d9;border-radius:3px;filter:blur(1.6px)"></div>
<div class="t" style="left:965px;top:503.15px;font-size:14px;line-height:14px;color:#333;font-weight:normal;">100 ml</div>
<div class="t" style="left:1092px;top:503.15px;font-size:14px;line-height:14px;color:#333;font-weight:normal;">10 gm</div>
<div class="r" style="left:1167px;top:502px;width:59px;height:21px;background:#00a65a;border-radius:3px;color:#fff;font-weight:bold;font-size:10.6px;line-height:18.5px;text-align:center;white-space:nowrap">Available</div>
<div class="r" style="left:1280px;top:502px;width:31px;height:21px;background:#00a65a;border-radius:3px;color:#fff;font-weight:bold;font-size:10.6px;line-height:18.5px;text-align:center;white-space:nowrap">Veg</div>
<div class="r" style="left:1376px;top:502px;width:60px;height:21px;background:#00a65a;border-radius:3px;color:#fff;font-weight:bold;font-size:10.6px;line-height:18.5px;text-align:center;white-space:nowrap">Approved</div>
<div class="r" style="left:1500px;top:502px;width:74px;height:21px;background:#dd4b39;border-radius:3px;color:#fff;font-weight:bold;font-size:10.6px;line-height:18.5px;text-align:center;white-space:nowrap">Not Allowed</div>
<div class="r" style="left:1591px;top:502px;width:74px;height:21px;background:#dd4b39;border-radius:3px;color:#fff;font-weight:bold;font-size:10.6px;line-height:18.5px;text-align:center;white-space:nowrap">Not Allowed</div>
<div class="r" style="left:1711px;top:502px;width:86px;height:21px;background:#63bff5;border-radius:3px;color:#fff;font-weight:bold;font-size:10.6px;line-height:18.5px;text-align:center;white-space:nowrap">Not Applicable</div>
<svg class="r" style="left:1818px;top:504px;" width="15" height="11" viewBox="0 0 15 11"><path d="M0.3 1.2Q0.3 0 1.5 0h3.2l1.3 1.3h5.3Q12.5 1.3 12.5 2.5v1.6H3.4L0.3 9z" fill="#3c8dbc"/><path d="M3.2 5h11.6l-3 5.2Q11.4 11 10.6 11H0.4z" fill="#3c8dbc"/></svg>
<svg class="r" style="left:1837px;top:503px;" width="15" height="13" viewBox="0 0 15 13"><path d="M8.2 1.5H2.5Q0.5 1.5 0.5 3.5V9.5Q0.5 11.5 2.5 11.5H8.5Q10.5 11.5 10.5 9.5V7.5" fill="none" stroke="#3c8dbc" stroke-width="1"/><path d="M5.2 9.2L5.4 7L11.4 1.2L13.6 3.3L7.6 9.2z" fill="#3c8dbc"/></svg>
<div class="r" style="left:1818px;top:521px;width:22px;height:22px;background:#dd4b39;border-radius:3px"></div>
<svg class="r" style="left:1824px;top:526px;" width="10" height="12" viewBox="0 0 10 12"><path d="M0.5 2.5h9M3.5 2.5V0.8h3v1.7" stroke="#fff" stroke-width="1.1" fill="none"/><path d="M1.6 3.3h6.8l-0.6 8H2.2z" fill="none" stroke="#fff" stroke-width="1.1"/><path d="M3.8 4.5v5.5M6.2 4.5v5.5" stroke="#fff" stroke-width="0.9"/></svg>
<div class="r" style="left:1843px;top:521px;width:24px;height:22px;background:#f39c12;border-radius:3px"></div>
<svg class="r" style="left:1848px;top:527px;" width="15" height="10" viewBox="0 0 15 10"><path d="M1 5C3.2 1.2 11.8 1.2 14 5 11.8 8.8 3.2 8.8 1 5z" fill="none" stroke="#fff" stroke-width="1.2"/><circle cx="7.5" cy="4.8" r="2.3" fill="none" stroke="#fff" stroke-width="1.1"/></svg>
<div class="t" style="left:264px;top:570.15px;font-size:14px;line-height:14px;color:#333;font-weight:normal;">82</div>
<div class="t" style="left:318px;top:570.15px;font-size:14px;line-height:14px;color:#333;font-weight:normal;">67</div>
<div class="t" style="left:426px;top:570.15px;font-size:14px;line-height:14px;color:#333;font-weight:normal;">1</div>
<div class="t" style="left:506px;top:570.15px;font-size:14px;line-height:14px;color:#333;font-weight:normal;">Grocers Corner</div>
<div class="t" style="left:626px;top:570.15px;font-size:14px;line-height:14px;color:#333;font-weight:normal;">Himalaya Baby</div>
<div class="t" style="left:626px;top:590.15px;font-size:14px;line-height:14px;color:#333;font-weight:normal;">Cream</div>
<svg class="r" style="left:755px;top:568px;" width="22" height="51" viewBox="0 0 22 51"><path d="M1 0H21L19.5 42H2.5Z" fill="#f6f6f8" stroke="#e2e2e8" stroke-width=".6"/><rect x="6" y="5" width="10" height="1.6" fill="#b8b070"/><rect x="5" y="13" width="12" height="13" fill="#9c8ccc"/><circle cx="15" cy="29" r="2" fill="#e8b0a0" opacity=".7"/><rect x="5" y="36" width="12" height="1.6" fill="#9c8ccc"/><path d="M3 41H19V48Q19 50 17 50H5Q3 50 3 48Z" fill="#1d6e58"/></svg>
<svg class="r" style="left:808px;top:571.5px;" width="9" height="11" viewBox="0 0 9 11"><path d="M0.5 0.9H8.7M0.5 3.4H8.7" stroke="#333" stroke-width="1.05"/><path d="M0.5 0.9H3.4C6.6 0.9 6.6 6.2 3.4 6.2H1.4L7.6 10.3" stroke="#333" stroke-width="1.1" fill="none" stroke-linejoin="round"/></svg>
<div class="r" style="left:821px;top:571px;width:24px;height:11px;background:#d9d9d9;border-radius:3px;filter:blur(1.6px)"></div>
<svg class="r" style="left:879px;top:571.5px;" width="9" height="11" viewBox="0 0 9 11"><path d="M0.5 0.9H8.7M0.5 3.4H8.7" stroke="#333" stroke-width="1.05"/><path d="M0.5 0.9H3.4C6.6 0.9 6.6 6.2 3.4 6.2H1.4L7.6 10.3" stroke="#333" stroke-width="1.1" fill="none" stroke-linejoin="round"/></svg>
<div class="r" style="left:891px;top:571px;width:24px;height:11px;background:#d9d9d9;border-radius:3px;filter:blur(1.6px)"></div>
<div class="t" style="left:965px;top:570.15px;font-size:14px;line-height:14px;color:#333;font-weight:normal;">100 ml</div>
<div class="t" style="left:1092px;top:570.15px;font-size:14px;line-height:14px;color:#333;font-weight:normal;">10 gm</div>
<div class="r" style="left:1167px;top:569px;width:59px;height:21px;background:#00a65a;border-radius:3px;color:#fff;font-weight:bold;font-size:10.6px;line-height:18.5px;text-align:center;white-space:nowrap">Available</div>
<div class="r" style="left:1280px;top:569px;width:31px;height:21px;background:#00a65a;border-radius:3px;color:#fff;font-weight:bold;font-size:10.6px;line-height:18.5px;text-align:center;white-space:nowrap">Veg</div>
<div class="r" style="left:1376px;top:569px;width:60px;height:21px;background:#00a65a;border-radius:3px;color:#fff;font-weight:bold;font-size:10.6px;line-height:18.5px;text-align:center;white-space:nowrap">Approved</div>
<div class="r" style="left:1500px;top:569px;width:74px;height:21px;background:#dd4b39;border-radius:3px;color:#fff;font-weight:bold;font-size:10.6px;line-height:18.5px;text-align:center;white-space:nowrap">Not Allowed</div>
<div class="r" style="left:1591px;top:569px;width:74px;height:21px;background:#dd4b39;border-radius:3px;color:#fff;font-weight:bold;font-size:10.6px;line-height:18.5px;text-align:center;white-space:nowrap">Not Allowed</div>
<div class="r" style="left:1711px;top:569px;width:86px;height:21px;background:#63bff5;border-radius:3px;color:#fff;font-weight:bold;font-size:10.6px;line-height:18.5px;text-align:center;white-space:nowrap">Not Applicable</div>
<svg class="r" style="left:1818px;top:571px;" width="15" height="11" viewBox="0 0 15 11"><path d="M0.3 1.2Q0.3 0 1.5 0h3.2l1.3 1.3h5.3Q12.5 1.3 12.5 2.5v1.6H3.4L0.3 9z" fill="#3c8dbc"/><path d="M3.2 5h11.6l-3 5.2Q11.4 11 10.6 11H0.4z" fill="#3c8dbc"/></svg>
<svg class="r" style="left:1837px;top:570px;" width="15" height="13" viewBox="0 0 15 13"><path d="M8.2 1.5H2.5Q0.5 1.5 0.5 3.5V9.5Q0.5 11.5 2.5 11.5H8.5Q10.5 11.5 10.5 9.5V7.5" fill="none" stroke="#3c8dbc" stroke-width="1"/><path d="M5.2 9.2L5.4 7L11.4 1.2L13.6 3.3L7.6 9.2z" fill="#3c8dbc"/></svg>
<div class="r" style="left:1818px;top:588px;width:22px;height:22px;background:#dd4b39;border-radius:3px"></div>
<svg class="r" style="left:1824px;top:593px;" width="10" height="12" viewBox="0 0 10 12"><path d="M0.5 2.5h9M3.5 2.5V0.8h3v1.7" stroke="#fff" stroke-width="1.1" fill="none"/><path d="M1.6 3.3h6.8l-0.6 8H2.2z" fill="none" stroke="#fff" stroke-width="1.1"/><path d="M3.8 4.5v5.5M6.2 4.5v5.5" stroke="#fff" stroke-width="0.9"/></svg>
<div class="r" style="left:1843px;top:588px;width:24px;height:22px;background:#f39c12;border-radius:3px"></div>
<svg class="r" style="left:1848px;top:594px;" width="15" height="10" viewBox="0 0 15 10"><path d="M1 5C3.2 1.2 11.8 1.2 14 5 11.8 8.8 3.2 8.8 1 5z" fill="none" stroke="#fff" stroke-width="1.2"/><circle cx="7.5" cy="4.8" r="2.3" fill="none" stroke="#fff" stroke-width="1.1"/></svg>
<div class="t" style="left:264px;top:637.15px;font-size:14px;line-height:14px;color:#333;font-weight:normal;">83</div>
<div class="t" style="left:318px;top:637.15px;font-size:14px;line-height:14px;color:#333;font-weight:normal;">67</div>
<div class="t" style="left:426px;top:637.15px;font-size:14px;line-height:14px;color:#333;font-weight:normal;">1</div>
<div class="t" style="left:506px;top:637.15px;font-size:14px;line-height:14px;color:#333;font-weight:normal;">Grocers Corner</div>
<div class="t" style="left:626px;top:637.15px;font-size:14px;line-height:14px;color:#333;font-weight:normal;">Himalaya Baby</div>
<div class="t" style="left:626px;top:657.15px;font-size:14px;line-height:14px;color:#333;font-weight:normal;">Cream</div>
<svg class="r" style="left:755px;top:635px;" width="22" height="51" viewBox="0 0 22 51"><path d="M1 0H21L19.5 42H2.5Z" fill="#f6f6f8" stroke="#e2e2e8" stroke-width=".6"/><rect x="6" y="5" width="10" height="1.6" fill="#b8b070"/><rect x="5" y="13" width="12" height="13" fill="#9c8ccc"/><circle cx="15" cy="29" r="2" fill="#e8b0a0" opacity=".7"/><rect x="5" y="36" width="12" height="1.6" fill="#9c8ccc"/><path d="M3 41H19V48Q19 50 17 50H5Q3 50 3 48Z" fill="#1d6e58"/></svg>
<svg class="r" style="left:808px;top:638.5px;" width="9" height="11" viewBox="0 0 9 11"><path d="M0.5 0.9H8.7M0.5 3.4H8.7" stroke="#333" stroke-width="1.05"/><path d="M0.5 0.9H3.4C6.6 0.9 6.6 6.2 3.4 6.2H1.4L7.6 10.3" stroke="#333" stroke-width="1.1" fill="none" stroke-linejoin="round"/></svg>
<div class="r" style="left:821px;top:638px;width:15px;height:11px;background:#d9d9d9;border-radius:3px;filter:blur(1.6px)"></div>
<svg class="r" style="left:879px;top:638.5px;" width="9" height="11" viewBox="0 0 9 11"><path d="M0.5 0.9H8.7M0.5 3.4H8.7" stroke="#333" stroke-width="1.05"/><path d="M0.5 0.9H3.4C6.6 0.9 6.6 6.2 3.4 6.2H1.4L7.6 10.3" stroke="#333" stroke-width="1.1" fill="none" stroke-linejoin="round"/></svg>
<div class="r" style="left:891px;top:638px;width:15px;height:11px;background:#d9d9d9;border-radius:3px;filter:blur(1.6px)"></div>
<div class="t" style="left:965px;top:637.15px;font-size:14px;line-height:14px;color:#333;font-weight:normal;">50 gm</div>
<div class="t" style="left:1092px;top:637.15px;font-size:14px;line-height:14px;color:#333;font-weight:normal;">10 gm</div>
<div class="r" style="left:1167px;top:636px;width:59px;height:21px;background:#00a65a;border-radius:3px;color:#fff;font-weight:bold;font-size:10.6px;line-height:18.5px;text-align:center;white-space:nowrap">Available</div>
<div class="r" style="left:1280px;top:636px;width:31px;height:21px;background:#00a65a;border-radius:3px;color:#fff;font-weight:bold;font-size:10.6px;line-height:18.5px;text-align:center;white-space:nowrap">Veg</div>
<div class="r" style="left:1376px;top:636px;width:60px;height:21px;background:#00a65a;border-radius:3px;color:#fff;font-weight:bold;font-size:10.6px;line-height:18.5px;text-align:center;white-space:nowrap">Approved</div>
<div class="r" style="left:1500px;top:636px;width:74px;height:21px;background:#dd4b39;border-radius:3px;color:#fff;font-weight:bold;font-size:10.6px;line-height:18.5px;text-align:center;white-space:nowrap">Not Allowed</div>
<div class="r" style="left:1591px;top:636px;width:74px;height:21px;background:#dd4b39;border-radius:3px;color:#fff;font-weight:bold;font-size:10.6px;line-height:18.5px;text-align:center;white-space:nowrap">Not Allowed</div>
<div class="r" style="left:1711px;top:636px;width:86px;height:21px;background:#63bff5;border-radius:3px;color:#fff;font-weight:bold;font-size:10.6px;line-height:18.5px;text-align:center;white-space:nowrap">Not Applicable</div>
<svg class="r" style="left:1818px;top:638px;" width="15" height="11" viewBox="0 0 15 11"><path d="M0.3 1.2Q0.3 0 1.5 0h3.2l1.3 1.3h5.3Q12.5 1.3 12.5 2.5v1.6H3.4L0.3 9z" fill="#3c8dbc"/><path d="M3.2 5h11.6l-3 5.2Q11.4 11 10.6 11H0.4z" fill="#3c8dbc"/></svg>
<svg class="r" style="left:1837px;top:637px;" width="15" height="13" viewBox="0 0 15 13"><path d="M8.2 1.5H2.5Q0.5 1.5 0.5 3.5V9.5Q0.5 11.5 2.5 11.5H8.5Q10.5 11.5 10.5 9.5V7.5" fill="none" stroke="#3c8dbc" stroke-width="1"/><path d="M5.2 9.2L5.4 7L11.4 1.2L13.6 3.3L7.6 9.2z" fill="#3c8dbc"/></svg>
<div class="r" style="left:1818px;top:655px;width:22px;height:22px;background:#dd4b39;border-radius:3px"></div>
<svg class="r" style="left:1824px;top:660px;" width="10" height="12" viewBox="0 0 10 12"><path d="M0.5 2.5h9M3.5 2.5V0.8h3v1.7" stroke="#fff" stroke-width="1.1" fill="none"/><path d="M1.6 3.3h6.8l-0.6 8H2.2z" fill="none" stroke="#fff" stroke-width="1.1"/><path d="M3.8 4.5v5.5M6.2 4.5v5.5" stroke="#fff" stroke-width="0.9"/></svg>
<div class="r" style="left:1843px;top:655px;width:24px;height:22px;background:#f39c12;border-radius:3px"></div>
<svg class="r" style="left:1848px;top:661px;" width="15" height="10" viewBox="0 0 15 10"><path d="M1 5C3.2 1.2 11.8 1.2 14 5 11.8 8.8 3.2 8.8 1 5z" fill="none" stroke="#fff" stroke-width="1.2"/><circle cx="7.5" cy="4.8" r="2.3" fill="none" stroke="#fff" stroke-width="1.1"/></svg>
<div class="t" style="left:264px;top:704.15px;font-size:14px;line-height:14px;color:#333;font-weight:normal;">81</div>
<div class="t" style="left:318px;top:704.15px;font-size:14px;line-height:14px;color:#333;font-weight:normal;">66</div>
<div class="t" style="left:426px;top:704.15px;font-size:14px;line-height:14px;color:#333;font-weight:normal;">1</div>
<div class="t" style="left:506px;top:704.15px;font-size:14px;line-height:14px;color:#333;font-weight:normal;">Grocers Corner</div>
<div class="t" style="left:626px;top:704.15px;font-size:14px;line-height:14px;color:#333;font-weight:normal;">Himalaya Baby</div>
<div class="t" style="left:626px;top:724.15px;font-size:14px;line-height:14px;color:#333;font-weight:normal;">soap (Pack &times; 3)</div>
<svg class="r" style="left:741px;top:702px;" width="50" height="50" viewBox="0 0 50 50"><circle cx="4" cy="3" r="2" fill="none" stroke="#aaa" stroke-width="1"/><path d="M7 10L36 8L50 10V44L36 48L9 46Z" fill="#7d6ad0"/><path d="M23 12L48 11V43L25 47Z" fill="#e8e6f6"/><rect x="10" y="6" width="12" height="5" rx="2" fill="#2a8a8a"/><path d="M9 11H23V46H9Z" fill="#f2f0f8"/><rect x="11" y="20" width="8" height="12" fill="#9c88d8"/><circle cx="33" cy="19" r="3" fill="#c8906e"/><rect x="28" y="25" width="13" height="7" fill="#8a78d0"/><path d="M10 44L48 42V46L12 49Z" fill="#6a58c0"/></svg>
<svg class="r" style="left:808px;top:705.5px;" width="9" height="11" viewBox="0 0 9 11"><path d="M0.5 0.9H8.7M0.5 3.4H8.7" stroke="#333" stroke-width="1.05"/><path d="M0.5 0.9H3.4C6.6 0.9 6.6 6.2 3.4 6.2H1.4L7.6 10.3" stroke="#333" stroke-width="1.1" fill="none" stroke-linejoin="round"/></svg>
<div class="r" style="left:821px;top:705px;width:24px;height:11px;background:#d9d9d9;border-radius:3px;filter:blur(1.6px)"></div>
<svg class="r" style="left:879px;top:705.5px;" width="9" height="11" viewBox="0 0 9 11"><path d="M0.5 0.9H8.7M0.5 3.4H8.7" stroke="#333" stroke-width="1.05"/><path d="M0.5 0.9H3.4C6.6 0.9 6.6 6.2 3.4 6.2H1.4L7.6 10.3" stroke="#333" stroke-width="1.1" fill="none" stroke-linejoin="round"/></svg>
<div class="r" style="left:891px;top:705px;width:8px;height:11px;background:#d9d9d9;border-radius:3px;filter:blur(1.6px)"></div>
<div class="t" style="left:965px;top:704.15px;font-size:14px;line-height:14px;color:#333;font-weight:normal;">75 gm</div>
<div class="t" style="left:1092px;top:704.15px;font-size:14px;line-height:14px;color:#333;font-weight:normal;">5 gm</div>
<div class="r" style="left:1167px;top:703px;width:59px;height:21px;background:#00a65a;border-radius:3px;color:#fff;font-weight:bold;font-size:10.6px;line-height:18.5px;text-align:center;white-space:nowrap">Available</div>
<div class="r" style="left:1280px;top:703px;width:31px;height:21px;background:#00a65a;border-radius:3px;color:#fff;font-weight:bold;font-size:10.6px;line-height:18.5px;text-align:center;white-space:nowrap">Veg</div>
<div class="r" style="left:1376px;top:703px;width:60px;height:21px;background:#00a65a;border-radius:3px;color:#fff;font-weight:bold;font-size:10.6px;line-height:18.5px;text-align:center;white-space:nowrap">Approved</div>
<div class="r" style="left:1500px;top:703px;width:74px;height:21px;background:#dd4b39;border-radius:3px;color:#fff;font-weight:bold;font-size:10.6px;line-height:18.5px;text-align:center;white-space:nowrap">Not Allowed</div>
<div class="r" style="left:1591px;top:703px;width:74px;height:21px;background:#dd4b39;border-radius:3px;color:#fff;font-weight:bold;font-size:10.6px;line-height:18.5px;text-align:center;white-space:nowrap">Not Allowed</div>
<div class="r" style="left:1711px;top:703px;width:86px;height:21px;background:#63bff5;border-radius:3px;color:#fff;font-weight:bold;font-size:10.6px;line-height:18.5px;text-align:center;white-space:nowrap">Not Applicable</div>
<svg class="r" style="left:1818px;top:705px;" width="15" height="11" viewBox="0 0 15 11"><path d="M0.3 1.2Q0.3 0 1.5 0h3.2l1.3 1.3h5.3Q12.5 1.3 12.5 2.5v1.6H3.4L0.3 9z" fill="#3c8dbc"/><path d="M3.2 5h11.6l-3 5.2Q11.4 11 10.6 11H0.4z" fill="#3c8dbc"/></svg>
<svg class="r" style="left:1837px;top:704px;" width="15" height="13" viewBox="0 0 15 13"><path d="M8.2 1.5H2.5Q0.5 1.5 0.5 3.5V9.5Q0.5 11.5 2.5 11.5H8.5Q10.5 11.5 10.5 9.5V7.5" fill="none" stroke="#3c8dbc" stroke-width="1"/><path d="M5.2 9.2L5.4 7L11.4 1.2L13.6 3.3L7.6 9.2z" fill="#3c8dbc"/></svg>
<div class="r" style="left:1818px;top:722px;width:22px;height:22px;background:#dd4b39;border-radius:3px"></div>
<svg class="r" style="left:1824px;top:727px;" width="10" height="12" viewBox="0 0 10 12"><path d="M0.5 2.5h9M3.5 2.5V0.8h3v1.7" stroke="#fff" stroke-width="1.1" fill="none"/><path d="M1.6 3.3h6.8l-0.6 8H2.2z" fill="none" stroke="#fff" stroke-width="1.1"/><path d="M3.8 4.5v5.5M6.2 4.5v5.5" stroke="#fff" stroke-width="0.9"/></svg>
<div class="r" style="left:1843px;top:722px;width:24px;height:22px;background:#f39c12;border-radius:3px"></div>
<svg class="r" style="left:1848px;top:728px;" width="15" height="10" viewBox="0 0 15 10"><path d="M1 5C3.2 1.2 11.8 1.2 14 5 11.8 8.8 3.2 8.8 1 5z" fill="none" stroke="#fff" stroke-width="1.2"/><circle cx="7.5" cy="4.8" r="2.3" fill="none" stroke="#fff" stroke-width="1.1"/></svg>
<div class="t" style="left:264px;top:771.15px;font-size:14px;line-height:14px;color:#333;font-weight:normal;">78</div>
<div class="t" style="left:318px;top:771.15px;font-size:14px;line-height:14px;color:#333;font-weight:normal;">65</div>
<div class="t" style="left:426px;top:771.15px;font-size:14px;line-height:14px;color:#333;font-weight:normal;">1</div>
<div class="t" style="left:506px;top:771.15px;font-size:14px;line-height:14px;color:#333;font-weight:normal;">Grocers Corner</div>
<div class="t" style="left:626px;top:771.15px;font-size:14px;line-height:14px;color:#333;font-weight:normal;">J &amp; J Baby</div>
<div class="t" style="left:626px;top:791.15px;font-size:14px;line-height:14px;color:#333;font-weight:normal;">powder</div>
<svg class="r" style="left:756px;top:771px;" width="20" height="46" viewBox="0 0 20 46"><path d="M5 1H14Q15 1 15 3V6Q18 8 18 11V42Q18 45 15 45H4Q1 45 1 42V11Q1 8 4 6V3Q4 1 5 1Z" fill="#f8f4f8" stroke="#e2dce4" stroke-width=".7"/><circle cx="13" cy="11" r="3" fill="#7ac0d8"/><rect x="10" y="12" width="7" height="2" fill="#e04050"/><circle cx="8" cy="17" r="1.7" fill="#e04858"/><path d="M4 22H14M4 24H12" stroke="#3a7ab8" stroke-width="1.1"/><path d="M6 28H13" stroke="#a8c8d8" stroke-width=".8"/></svg>
<svg class="r" style="left:808px;top:772.5px;" width="9" height="11" viewBox="0 0 9 11"><path d="M0.5 0.9H8.7M0.5 3.4H8.7" stroke="#333" stroke-width="1.05"/><path d="M0.5 0.9H3.4C6.6 0.9 6.6 6.2 3.4 6.2H1.4L7.6 10.3" stroke="#333" stroke-width="1.1" fill="none" stroke-linejoin="round"/></svg>
<div class="r" style="left:821px;top:772px;width:15px;height:11px;background:#d9d9d9;border-radius:3px;filter:blur(1.6px)"></div>
<svg class="r" style="left:879px;top:772.5px;" width="9" height="11" viewBox="0 0 9 11"><path d="M0.5 0.9H8.7M0.5 3.4H8.7" stroke="#333" stroke-width="1.05"/><path d="M0.5 0.9H3.4C6.6 0.9 6.6 6.2 3.4 6.2H1.4L7.6 10.3" stroke="#333" stroke-width="1.1" fill="none" stroke-linejoin="round"/></svg>
<div class="r" style="left:891px;top:772px;width:8px;height:11px;background:#d9d9d9;border-radius:3px;filter:blur(1.6px)"></div>
<div class="t" style="left:965px;top:771.15px;font-size:14px;line-height:14px;color:#333;font-weight:normal;">30 gm</div>
<div class="t" style="left:1092px;top:771.15px;font-size:14px;line-height:14px;color:#333;font-weight:normal;">20 gm</div>
<div class="r" style="left:1167px;top:770px;width:59px;height:21px;background:#00a65a;border-radius:3px;color:#fff;font-weight:bold;font-size:10.6px;line-height:18.5px;text-align:center;white-space:nowrap">Available</div>
<div class="r" style="left:1280px;top:770px;width:31px;height:21px;background:#00a65a;border-radius:3px;color:#fff;font-weight:bold;font-size:10.6px;line-height:18.5px;text-align:center;white-space:nowrap">Veg</div>
<div class="r" style="left:1376px;top:770px;width:60px;height:21px;background:#00a65a;border-radius:3px;color:#fff;font-weight:bold;font-size:10.6px;line-height:18.5px;text-align:center;white-space:nowrap">Approved</div>
<div class="r" style="left:1500px;top:770px;width:74px;height:21px;background:#dd4b39;border-radius:3px;color:#fff;font-weight:bold;font-size:10.6px;line-height:18.5px;text-align:center;white-space:nowrap">Not Allowed</div>
<div class="r" style="left:1591px;top:770px;width:74px;height:21px;background:#dd4b39;border-radius:3px;color:#fff;font-weight:bold;font-size:10.6px;line-height:18.5px;text-align:center;white-space:nowrap">Not Allowed</div>
<div class="r" style="left:1711px;top:770px;width:86px;height:21px;background:#63bff5;border-radius:3px;color:#fff;font-weight:bold;font-size:10.6px;line-height:18.5px;text-align:center;white-space:nowrap">Not Applicable</div>
<svg class="r" style="left:1818px;top:772px;" width="15" height="11" viewBox="0 0 15 11"><path d="M0.3 1.2Q0.3 0 1.5 0h3.2l1.3 1.3h5.3Q12.5 1.3 12.5 2.5v1.6H3.4L0.3 9z" fill="#3c8dbc"/><path d="M3.2 5h11.6l-3 5.2Q11.4 11 10.6 11H0.4z" fill="#3c8dbc"/></svg>
<svg class="r" style="left:1837px;top:771px;" width="15" height="13" viewBox="0 0 15 13"><path d="M8.2 1.5H2.5Q0.5 1.5 0.5 3.5V9.5Q0.5 11.5 2.5 11.5H8.5Q10.5 11.5 10.5 9.5V7.5" fill="none" stroke="#3c8dbc" stroke-width="1"/><path d="M5.2 9.2L5.4 7L11.4 1.2L13.6 3.3L7.6 9.2z" fill="#3c8dbc"/></svg>
<div class="r" style="left:1818px;top:789px;width:22px;height:22px;background:#dd4b39;border-radius:3px"></div>
<svg class="r" style="left:1824px;top:794px;" width="10" height="12" viewBox="0 0 10 12"><path d="M0.5 2.5h9M3.5 2.5V0.8h3v1.7" stroke="#fff" stroke-width="1.1" fill="none"/><path d="M1.6 3.3h6.8l-0.6 8H2.2z" fill="none" stroke="#fff" stroke-width="1.1"/><path d="M3.8 4.5v5.5M6.2 4.5v5.5" stroke="#fff" stroke-width="0.9"/></svg>
<div class="r" style="left:1843px;top:789px;width:24px;height:22px;background:#f39c12;border-radius:3px"></div>
<svg class="r" style="left:1848px;top:795px;" width="15" height="10" viewBox="0 0 15 10"><path d="M1 5C3.2 1.2 11.8 1.2 14 5 11.8 8.8 3.2 8.8 1 5z" fill="none" stroke="#fff" stroke-width="1.2"/><circle cx="7.5" cy="4.8" r="2.3" fill="none" stroke="#fff" stroke-width="1.1"/></svg>
<div class="t" style="left:264px;top:838.15px;font-size:14px;line-height:14px;color:#333;font-weight:normal;">79</div>
<div class="t" style="left:318px;top:838.15px;font-size:14px;line-height:14px;color:#333;font-weight:normal;">65</div>
<div class="t" style="left:426px;top:838.15px;font-size:14px;line-height:14px;color:#333;font-weight:normal;">1</div>
<div class="t" style="left:506px;top:838.15px;font-size:14px;line-height:14px;color:#333;font-weight:normal;">Grocers Corner</div>
<div class="t" style="left:626px;top:838.15px;font-size:14px;line-height:14px;color:#333;font-weight:normal;">J &amp; J Baby</div>
<div class="t" style="left:626px;top:858.15px;font-size:14px;line-height:14px;color:#333;font-weight:normal;">powder</div>
<svg class="r" style="left:756px;top:838px;" width="20" height="46" viewBox="0 0 20 46"><path d="M5 1H14Q15 1 15 3V6Q18 8 18 11V42Q18 45 15 45H4Q1 45 1 42V11Q1 8 4 6V3Q4 1 5 1Z" fill="#f8f4f8" stroke="#e2dce4" stroke-width=".7"/><circle cx="13" cy="11" r="3" fill="#7ac0d8"/><rect x="10" y="12" width="7" height="2" fill="#e04050"/><circle cx="8" cy="17" r="1.7" fill="#e04858"/><path d="M4 22H14M4 24H12" stroke="#3a7ab8" stroke-width="1.1"/><path d="M6 28H13" stroke="#a8c8d8" stroke-width=".8"/></svg>
<svg class="r" style="left:808px;top:839.5px;" width="9" height="11" viewBox="0 0 9 11"><path d="M0.5 0.9H8.7M0.5 3.4H8.7" stroke="#333" stroke-width="1.05"/><path d="M0.5 0.9H3.4C6.6 0.9 6.6 6.2 3.4 6.2H1.4L7.6 10.3" stroke="#333" stroke-width="1.1" fill="none" stroke-linejoin="round"/></svg>
<div class="r" style="left:821px;top:839px;width:15px;height:11px;background:#d9d9d9;border-radius:3px;filter:blur(1.6px)"></div>
<svg class="r" style="left:879px;top:839.5px;" width="9" height="11" viewBox="0 0 9 11"><path d="M0.5 0.9H8.7M0.5 3.4H8.7" stroke="#333" stroke-width="1.05"/><path d="M0.5 0.9H3.4C6.6 0.9 6.6 6.2 3.4 6.2H1.4L7.6 10.3" stroke="#333" stroke-width="1.1" fill="none" stroke-linejoin="round"/></svg>
<div class="r" style="left:891px;top:839px;width:8px;height:11px;background:#d9d9d9;border-radius:3px;filter:blur(1.6px)"></div>
<div class="t" style="left:965px;top:838.15px;font-size:14px;line-height:14px;color:#333;font-weight:normal;">50 gm</div>
<div class="t" style="left:1092px;top:838.15px;font-size:14px;line-height:14px;color:#333;font-weight:normal;">20 gm</div>
<div class="r" style="left:1167px;top:837px;width:59px;height:21px;background:#00a65a;border-radius:3px;color:#fff;font-weight:bold;font-size:10.6px;line-height:18.5px;text-align:center;white-space:nowrap">Available</div>
<div class="r" style="left:1280px;top:837px;width:31px;height:21px;background:#00a65a;border-radius:3px;color:#fff;font-weight:bold;font-size:10.6px;line-height:18.5px;text-align:center;white-space:nowrap">Veg</div>
<div class="r" style="left:1376px;top:837px;width:60px;height:21px;background:#00a65a;border-radius:3px;color:#fff;font-weight:bold;font-size:10.6px;line-height:18.5px;text-align:center;white-space:nowrap">Approved</div>
<div class="r" style="left:1500px;top:837px;width:74px;height:21px;background:#dd4b39;border-radius:3px;color:#fff;font-weight:bold;font-size:10.6px;line-height:18.5px;text-align:center;white-space:nowrap">Not Allowed</div>
<div class="r" style="left:1591px;top:837px;width:74px;height:21px;background:#dd4b39;border-radius:3px;color:#fff;font-weight:bold;font-size:10.6px;line-height:18.5px;text-align:center;white-space:nowrap">Not Allowed</div>
<div class="r" style="left:1711px;top:837px;width:86px;height:21px;background:#63bff5;border-radius:3px;color:#fff;font-weight:bold;font-size:10.6px;line-height:18.5px;text-align:center;white-space:nowrap">Not Applicable</div>
<svg class="r" style="left:1818px;top:839px;" width="15" height="11" viewBox="0 0 15 11"><path d="M0.3 1.2Q0.3 0 1.5 0h3.2l1.3 1.3h5.3Q12.5 1.3 12.5 2.5v1.6H3.4L0.3 9z" fill="#3c8dbc"/><path d="M3.2 5h11.6l-3 5.2Q11.4 11 10.6 11H0.4z" fill="#3c8dbc"/></svg>
<svg class="r" style="left:1837px;top:838px;" width="15" height="13" viewBox="0 0 15 13"><path d="M8.2 1.5H2.5Q0.5 1.5 0.5 3.5V9.5Q0.5 11.5 2.5 11.5H8.5Q10.5 11.5 10.5 9.5V7.5" fill="none" stroke="#3c8dbc" stroke-width="1"/><path d="M5.2 9.2L5.4 7L11.4 1.2L13.6 3.3L7.6 9.2z" fill="#3c8dbc"/></svg>
<div class="r" style="left:1818px;top:856px;width:22px;height:22px;background:#dd4b39;border-radius:3px"></div>
<svg class="r" style="left:1824px;top:861px;" width="10" height="12" viewBox="0 0 10 12"><path d="M0.5 2.5h9M3.5 2.5V0.8h3v1.7" stroke="#fff" stroke-width="1.1" fill="none"/><path d="M1.6 3.3h6.8l-0.6 8H2.2z" fill="none" stroke="#fff" stroke-width="1.1"/><path d="M3.8 4.5v5.5M6.2 4.5v5.5" stroke="#fff" stroke-width="0.9"/></svg>
<div class="r" style="left:1843px;top:856px;width:24px;height:22px;background:#f39c12;border-radius:3px"></div>
<svg class="r" style="left:1848px;top:862px;" width="15" height="10" viewBox="0 0 15 10"><path d="M1 5C3.2 1.2 11.8 1.2 14 5 11.8 8.8 3.2 8.8 1 5z" fill="none" stroke="#fff" stroke-width="1.2"/><circle cx="7.5" cy="4.8" r="2.3" fill="none" stroke="#fff" stroke-width="1.1"/></svg>
<div class="t" style="left:264px;top:905.15px;font-size:14px;line-height:14px;color:#333;font-weight:normal;">80</div>
<div class="t" style="left:318px;top:905.15px;font-size:14px;line-height:14px;color:#333;font-weight:normal;">65</div>
<div class="t" style="left:426px;top:905.15px;font-size:14px;line-height:14px;color:#333;font-weight:normal;">1</div>
<div class="t" style="left:506px;top:905.15px;font-size:14px;line-height:14px;color:#333;font-weight:normal;">Grocers Corner</div>
<div class="t" style="left:626px;top:905.15px;font-size:14px;line-height:14px;color:#333;font-weight:normal;">J &amp; J Baby</div>
<div class="t" style="left:626px;top:925.15px;font-size:14px;line-height:14px;color:#333;font-weight:normal;">powder</div>
<svg class="r" style="left:756px;top:905px;" width="20" height="46" viewBox="0 0 20 46"><path d="M5 1H14Q15 1 15 3V6Q18 8 18 11V42Q18 45 15 45H4Q1 45 1 42V11Q1 8 4 6V3Q4 1 5 1Z" fill="#f8f4f8" stroke="#e2dce4" stroke-width=".7"/><circle cx="13" cy="11" r="3" fill="#7ac0d8"/><rect x="10" y="12" width="7" height="2" fill="#e04050"/><circle cx="8" cy="17" r="1.7" fill="#e04858"/><path d="M4 22H14M4 24H12" stroke="#3a7ab8" stroke-width="1.1"/><path d="M6 28H13" stroke="#a8c8d8" stroke-width=".8"/></svg>
<svg class="r" style="left:808px;top:906.5px;" width="9" height="11" viewBox="0 0 9 11"><path d="M0.5 0.9H8.7M0.5 3.4H8.7" stroke="#333" stroke-width="1.05"/><path d="M0.5 0.9H3.4C6.6 0.9 6.6 6.2 3.4 6.2H1.4L7.6 10.3" stroke="#333" stroke-width="1.1" fill="none" stroke-linejoin="round"/></svg>
<div class="r" style="left:821px;top:906px;width:15px;height:11px;background:#d9d9d9;border-radius:3px;filter:blur(1.6px)"></div>
<svg class="r" style="left:879px;top:906.5px;" width="9" height="11" viewBox="0 0 9 11"><path d="M0.5 0.9H8.7M0.5 3.4H8.7" stroke="#333" stroke-width="1.05"/><path d="M0.5 0.9H3.4C6.6 0.9 6.6 6.2 3.4 6.2H1.4L7.6 10.3" stroke="#333" stroke-width="1.1" fill="none" stroke-linejoin="round"/></svg>
<div class="r" style="left:891px;top:906px;width:8px;height:11px;background:#d9d9d9;border-radius:3px;filter:blur(1.6px)"></div>
<div class="t" style="left:965px;top:905.15px;font-size:14px;line-height:14px;color:#333;font-weight:normal;">100 gm</div>
<div class="t" style="left:1092px;top:905.15px;font-size:14px;line-height:14px;color:#333;font-weight:normal;">20 gm</div>
<div class="r" style="left:1167px;top:904px;width:59px;height:21px;background:#00a65a;border-radius:3px;color:#fff;font-weight:bold;font-size:10.6px;line-height:18.5px;text-align:center;white-space:nowrap">Available</div>
<div class="r" style="left:1280px;top:904px;width:31px;height:21px;background:#00a65a;border-radius:3px;color:#fff;font-weight:bold;font-size:10.6px;line-height:18.5px;text-align:center;white-space:nowrap">Veg</div>
<div class="r" style="left:1376px;top:904px;width:60px;height:21px;background:#00a65a;border-radius:3px;color:#fff;font-weight:bold;font-size:10.6px;line-height:18.5px;text-align:center;white-space:nowrap">Approved</div>
<div class="r" style="left:1500px;top:904px;width:74px;height:21px;background:#dd4b39;border-radius:3px;color:#fff;font-weight:bold;font-size:10.6px;line-height:18.5px;text-align:center;white-space:nowrap">Not Allowed</div>
<div class="r" style="left:1591px;top:904px;width:74px;height:21px;background:#dd4b39;border-radius:3px;color:#fff;font-weight:bold;font-size:10.6px;line-height:18.5px;text-align:center;white-space:nowrap">Not Allowed</div>
<div class="r" style="left:1711px;top:904px;width:86px;height:21px;background:#63bff5;border-radius:3px;color:#fff;font-weight:bold;font-size:10.6px;line-height:18.5px;text-align:center;white-space:nowrap">Not Applicable</div>
<svg class="r" style="left:1818px;top:906px;" width="15" height="11" viewBox="0 0 15 11"><path d="M0.3 1.2Q0.3 0 1.5 0h3.2l1.3 1.3h5.3Q12.5 1.3 12.5 2.5v1.6H3.4L0.3 9z" fill="#3c8dbc"/><path d="M3.2 5h11.6l-3 5.2Q11.4 11 10.6 11H0.4z" fill="#3c8dbc"/></svg>
<svg class="r" style="left:1837px;top:905px;" width="15" height="13" viewBox="0 0 15 13"><path d="M8.2 1.5H2.5Q0.5 1.5 0.5 3.5V9.5Q0.5 11.5 2.5 11.5H8.5Q10.5 11.5 10.5 9.5V7.5" fill="none" stroke="#3c8dbc" stroke-width="1"/><path d="M5.2 9.2L5.4 7L11.4 1.2L13.6 3.3L7.6 9.2z" fill="#3c8dbc"/></svg>
<div class="r" style="left:1818px;top:923px;width:22px;height:22px;background:#dd4b39;border-radius:3px"></div>
<svg class="r" style="left:1824px;top:928px;" width="10" height="12" viewBox="0 0 10 12"><path d="M0.5 2.5h9M3.5 2.5V0.8h3v1.7" stroke="#fff" stroke-width="1.1" fill="none"/><path d="M1.6 3.3h6.8l-0.6 8H2.2z" fill="none" stroke="#fff" stroke-width="1.1"/><path d="M3.8 4.5v5.5M6.2 4.5v5.5" stroke="#fff" stroke-width="0.9"/></svg>
<div class="r" style="left:1843px;top:923px;width:24px;height:22px;background:#f39c12;border-radius:3px"></div>
<svg class="r" style="left:1848px;top:929px;" width="15" height="10" viewBox="0 0 15 10"><path d="M1 5C3.2 1.2 11.8 1.2 14 5 11.8 8.8 3.2 8.8 1 5z" fill="none" stroke="#fff" stroke-width="1.2"/><circle cx="7.5" cy="4.8" r="2.3" fill="none" stroke="#fff" stroke-width="1.1"/></svg>
<div class="t" style="left:264px;top:972.15px;font-size:14px;line-height:14px;color:#333;font-weight:normal;">74</div>
<div class="t" style="left:318px;top:972.15px;font-size:14px;line-height:14px;color:#333;font-weight:normal;">63</div>
<div class="t" style="left:426px;top:972.15px;font-size:14px;line-height:14px;color:#333;font-weight:normal;">1</div>
<div class="t" style="left:506px;top:972.15px;font-size:14px;line-height:14px;color:#333;font-weight:normal;">Grocers Corner</div>
<div class="t" style="left:626px;top:972.15px;font-size:14px;line-height:14px;color:#333;font-weight:normal;">Dexolac-4</div>
<svg class="r" style="left:750px;top:974px;" width="32" height="42" viewBox="0 0 32 42"><defs><linearGradient id="dx961" x1="0" y1="0" x2="0" y2="1"><stop offset="0" stop-color="#14a88e"/><stop offset=".45" stop-color="#b8e6dc"/><stop offset=".75" stop-color="#1aae94"/><stop offset=".8" stop-color="#e8e8e8"/><stop offset="1" stop-color="#d8d8d8"/></linearGradient></defs><rect x="1" y="0" width="30" height="42" fill="url(#dx961)"/><rect x="2" y="2" width="6" height="5" fill="#3a58b0"/><rect x="25" y="2" width="4" height="5" fill="#e02a8a"/><text x="3" y="19" font-size="6.5" font-weight="bold" fill="#3a58b0" font-family="Liberation Sans" textLength="26" lengthAdjust="spacingAndGlyphs">DEXOLAC</text><rect x="22" y="22" width="5" height="5" fill="#d05aa0" opacity=".8"/></svg>
<svg class="r" style="left:808px;top:973.5px;" width="9" height="11" viewBox="0 0 9 11"><path d="M0.5 0.9H8.7M0.5 3.4H8.7" stroke="#333" stroke-width="1.05"/><path d="M0.5 0.9H3.4C6.6 0.9 6.6 6.2 3.4 6.2H1.4L7.6 10.3" stroke="#333" stroke-width="1.1" fill="none" stroke-linejoin="round"/></svg>
<div class="r" style="left:821px;top:973px;width:24px;height:11px;background:#d9d9d9;border-radius:3px;filter:blur(1.6px)"></div>
<svg class="r" style="left:879px;top:973.5px;" width="9" height="11" viewBox="0 0 9 11"><path d="M0.5 0.9H8.7M0.5 3.4H8.7" stroke="#333" stroke-width="1.05"/><path d="M0.5 0.9H3.4C6.6 0.9 6.6 6.2 3.4 6.2H1.4L7.6 10.3" stroke="#333" stroke-width="1.1" fill="none" stroke-linejoin="round"/></svg>
<div class="r" style="left:891px;top:973px;width:24px;height:11px;background:#d9d9d9;border-radius:3px;filter:blur(1.6px)"></div>
<div class="t" style="left:965px;top:972.15px;font-size:14px;line-height:14px;color:#333;font-weight:normal;">400 gm</div>
<div class="t" style="left:1092px;top:972.15px;font-size:14px;line-height:14px;color:#333;font-weight:normal;">10 gm</div>
<div class="r" style="left:1167px;top:971px;width:59px;height:21px;background:#00a65a;border-radius:3px;color:#fff;font-weight:bold;font-size:10.6px;line-height:18.5px;text-align:center;white-space:nowrap">Available</div>
<div class="r" style="left:1280px;top:971px;width:38px;height:21px;background:#63bff5;border-radius:3px;color:#fff;font-weight:bold;font-size:10.6px;line-height:18.5px;text-align:center;white-space:nowrap">None</div>
<div class="r" style="left:1376px;top:971px;width:60px;height:21px;background:#00a65a;border-radius:3px;color:#fff;font-weight:bold;font-size:10.6px;line-height:18.5px;text-align:center;white-space:nowrap">Approved</div>
<div class="r" style="left:1500px;top:971px;width:74px;height:21px;background:#dd4b39;border-radius:3px;color:#fff;font-weight:bold;font-size:10.6px;line-height:18.5px;text-align:center;white-space:nowrap">Not Allowed</div>
<div class="r" style="left:1591px;top:971px;width:74px;height:21px;background:#dd4b39;border-radius:3px;color:#fff;font-weight:bold;font-size:10.6px;line-height:18.5px;text-align:center;white-space:nowrap">Not Allowed</div>
<div class="r" style="left:1711px;top:971px;width:86px;height:21px;background:#63bff5;border-radius:3px;color:#fff;font-weight:bold;font-size:10.6px;line-height:18.5px;text-align:center;white-space:nowrap">Not Applicable</div>
<svg class="r" style="left:1818px;top:973px;" width="15" height="11" viewBox="0 0 15 11"><path d="M0.3 1.2Q0.3 0 1.5 0h3.2l1.3 1.3h5.3Q12.5 1.3 12.5 2.5v1.6H3.4L0.3 9z" fill="#3c8dbc"/><path d="M3.2 5h11.6l-3 5.2Q11.4 11 10.6 11H0.4z" fill="#3c8dbc"/></svg>
<svg class="r" style="left:1837px;top:972px;" width="15" height="13" viewBox="0 0 15 13"><path d="M8.2 1.5H2.5Q0.5 1.5 0.5 3.5V9.5Q0.5 11.5 2.5 11.5H8.5Q10.5 11.5 10.5 9.5V7.5" fill="none" stroke="#3c8dbc" stroke-width="1"/><path d="M5.2 9.2L5.4 7L11.4 1.2L13.6 3.3L7.6 9.2z" fill="#3c8dbc"/></svg>
<div class="r" style="left:1818px;top:990px;width:22px;height:22px;background:#dd4b39;border-radius:3px"></div>
<svg class="r" style="left:1824px;top:995px;" width="10" height="12" viewBox="0 0 10 12"><path d="M0.5 2.5h9M3.5 2.5V0.8h3v1.7" stroke="#fff" stroke-width="1.1" fill="none"/><path d="M1.6 3.3h6.8l-0.6 8H2.2z" fill="none" stroke="#fff" stroke-width="1.1"/><path d="M3.8 4.5v5.5M6.2 4.5v5.5" stroke="#fff" stroke-width="0.9"/></svg>
<div class="r" style="left:1843px;top:990px;width:24px;height:22px;background:#f39c12;border-radius:3px"></div>
<svg class="r" style="left:1848px;top:996px;" width="15" height="10" viewBox="0 0 15 10"><path d="M1 5C3.2 1.2 11.8 1.2 14 5 11.8 8.8 3.2 8.8 1 5z" fill="none" stroke="#fff" stroke-width="1.2"/><circle cx="7.5" cy="4.8" r="2.3" fill="none" stroke="#fff" stroke-width="1.1"/></svg>
<div class="t" style="left:264px;top:1039.15px;font-size:14px;line-height:14px;color:#333;font-weight:normal;">73</div>
<div class="t" style="left:318px;top:1039.15px;font-size:14px;line-height:14px;color:#333;font-weight:normal;">62</div>
<div class="t" style="left:426px;top:1039.15px;font-size:14px;line-height:14px;color:#333;font-weight:normal;">1</div>
<div class="t" style="left:506px;top:1039.15px;font-size:14px;line-height:14px;color:#333;font-weight:normal;">Grocers Corner</div>
<div class="t" style="left:626px;top:1039.15px;font-size:14px;line-height:14px;color:#333;font-weight:normal;">Nutricia</div>
<div class="t" style="left:626px;top:1059.15px;font-size:14px;line-height:14px;color:#333;font-weight:normal;">Dexolac-1</div>
<svg class="r" style="left:741px;top:1037px;" width="38" height="43" viewBox="0 0 38 43"><defs><linearGradient id="dy1028" x1="0" y1="0" x2="0" y2="1"><stop offset="0" stop-color="#14a88e"/><stop offset=".55" stop-color="#b8e6dc"/><stop offset="1" stop-color="#1aae94"/></linearGradient></defs><rect x="0" y="0" width="36" height="43" fill="url(#dy1028)"/><rect x="1" y="4" width="7" height="6" fill="#3a58b0"/><rect x="29" y="2" width="4" height="6" fill="#e02a8a"/><text x="3" y="23" font-size="7.5" font-weight="bold" fill="#3a58b0" font-family="Liberation Sans" textLength="30" lengthAdjust="spacingAndGlyphs">DEXOLAC</text><rect x="26" y="27" width="6" height="6" fill="#d05aa0" opacity=".8"/></svg>
<svg class="r" style="left:808px;top:1040.5px;" width="9" height="11" viewBox="0 0 9 11"><path d="M0.5 0.9H8.7M0.5 3.4H8.7" stroke="#333" stroke-width="1.05"/><path d="M0.5 0.9H3.4C6.6 0.9 6.6 6.2 3.4 6.2H1.4L7.6 10.3" stroke="#333" stroke-width="1.1" fill="none" stroke-linejoin="round"/></svg>
<div class="r" style="left:821px;top:1040px;width:24px;height:11px;background:#d9d9d9;border-radius:3px;filter:blur(1.6px)"></div>
<svg class="r" style="left:879px;top:1040.5px;" width="9" height="11" viewBox="0 0 9 11"><path d="M0.5 0.9H8.7M0.5 3.4H8.7" stroke="#333" stroke-width="1.05"/><path d="M0.5 0.9H3.4C6.6 0.9 6.6 6.2 3.4 6.2H1.4L7.6 10.3" stroke="#333" stroke-width="1.1" fill="none" stroke-linejoin="round"/></svg>
<div class="r" style="left:891px;top:1040px;width:24px;height:11px;background:#d9d9d9;border-radius:3px;filter:blur(1.6px)"></div>
<div class="t" style="left:965px;top:1039.15px;font-size:14px;line-height:14px;color:#333;font-weight:normal;">400 gm</div>
<div class="t" style="left:1092px;top:1039.15px;font-size:14px;line-height:14px;color:#333;font-weight:normal;">10 gm</div>
<div class="r" style="left:1167px;top:1038px;width:59px;height:21px;background:#00a65a;border-radius:3px;color:#fff;font-weight:bold;font-size:10.6px;line-height:18.5px;text-align:center;white-space:nowrap">Available</div>
<div class="r" style="left:1280px;top:1038px;width:31px;height:21px;background:#00a65a;border-radius:3px;color:#fff;font-weight:bold;font-size:10.6px;line-height:18.5px;text-align:center;white-space:nowrap">Veg</div>
<div class="r" style="left:1376px;top:1038px;width:60px;height:21px;background:#00a65a;border-radius:3px;color:#fff;font-weight:bold;font-size:10.6px;line-height:18.5px;text-align:center;white-space:nowrap">Approved</div>
<div class="r" style="left:1500px;top:1038px;width:74px;height:21px;background:#dd4b39;border-radius:3px;color:#fff;font-weight:bold;font-size:10.6px;line-height:18.5px;text-align:center;white-space:nowrap">Not Allowed</div>
<div class="r" style="left:1591px;top:1038px;width:74px;height:21px;background:#dd4b39;border-radius:3px;color:#fff;font-weight:bold;font-size:10.6px;line-height:18.5px;text-align:center;white-space:nowrap">Not Allowed</div>
<div class="r" style="left:1711px;top:1038px;width:86px;height:21px;background:#63bff5;border-radius:3px;color:#fff;font-weight:bold;font-size:10.6px;line-height:18.5px;text-align:center;white-space:nowrap">Not Applicable</div>
<svg class="r" style="left:1818px;top:1040px;" width="15" height="11" viewBox="0 0 15 11"><path d="M0.3 1.2Q0.3 0 1.5 0h3.2l1.3 1.3h5.3Q12.5 1.3 12.5 2.5v1.6H3.4L0.3 9z" fill="#3c8dbc"/><path d="M3.2 5h11.6l-3 5.2Q11.4 11 10.6 11H0.4z" fill="#3c8dbc"/></svg>
<svg class="r" style="left:1837px;top:1039px;" width="15" height="13" viewBox="0 0 15 13"><path d="M8.2 1.5H2.5Q0.5 1.5 0.5 3.5V9.5Q0.5 11.5 2.5 11.5H8.5Q10.5 11.5 10.5 9.5V7.5" fill="none" stroke="#3c8dbc" stroke-width="1"/><path d="M5.2 9.2L5.4 7L11.4 1.2L13.6 3.3L7.6 9.2z" fill="#3c8dbc"/></svg>
<div class="r" style="left:1818px;top:1057px;width:22px;height:22px;background:#dd4b39;border-radius:3px"></div>
<svg class="r" style="left:1824px;top:1062px;" width="10" height="12" viewBox="0 0 10 12"><path d="M0.5 2.5h9M3.5 2.5V0.8h3v1.7" stroke="#fff" stroke-width="1.1" fill="none"/><path d="M1.6 3.3h6.8l-0.6 8H2.2z" fill="none" stroke="#fff" stroke-width="1.1"/><path d="M3.8 4.5v5.5M6.2 4.5v5.5" stroke="#fff" stroke-width="0.9"/></svg>
<div class="r" style="left:1843px;top:1057px;width:24px;height:22px;background:#f39c12;border-radius:3px"></div>
<svg class="r" style="left:1848px;top:1063px;" width="15" height="10" viewBox="0 0 15 10"><path d="M1 5C3.2 1.2 11.8 1.2 14 5 11.8 8.8 3.2 8.8 1 5z" fill="none" stroke="#fff" stroke-width="1.2"/><circle cx="7.5" cy="4.8" r="2.3" fill="none" stroke="#fff" stroke-width="1.1"/></svg>
<div class="r" style="left:270px;top:175px;width:300px;height:180px;background:#fff;border:1px solid #a8a8a8;border-radius:7px;box-shadow:0 14px 42px rgba(0,0,0,.32);overflow:hidden">
<div style="position:absolute;left:0;top:-1px;width:298px;height:20px;color:#333;font-size:14px;line-height:18px;padding-left:16px;white-space:nowrap">All Products</div>
<div style="position:absolute;left:0;top:19px;width:298px;height:20px;color:#333;font-size:14px;line-height:18px;padding-left:16px;white-space:nowrap">Grocery</div>
<div style="position:absolute;left:0;top:39px;width:298px;height:20px;background:#1e90ff;color:#fff;font-size:14px;line-height:18px;padding-left:16px;white-space:nowrap">Baby Care &amp; Wellness</div>
<div style="position:absolute;left:0;top:59px;width:298px;height:20px;color:#333;font-size:14px;line-height:18px;padding-left:16px;white-space:nowrap">Household and Cleaning</div>
<div style="position:absolute;left:0;top:79px;width:298px;height:20px;color:#333;font-size:14px;line-height:18px;padding-left:16px;white-space:nowrap">Personal Care</div>
<div style="position:absolute;left:0;top:99px;width:298px;height:20px;color:#333;font-size:14px;line-height:18px;padding-left:16px;white-space:nowrap">Breakfast, Health Drinks</div>
<div style="position:absolute;left:0;top:119px;width:298px;height:20px;color:#333;font-size:14px;line-height:18px;padding-left:16px;white-space:nowrap">Snacks and confectionery</div>
<div style="position:absolute;left:0;top:139px;width:298px;height:20px;color:#333;font-size:14px;line-height:18px;padding-left:16px;white-space:nowrap">Cakes and accessories</div>
<div style="position:absolute;left:0;top:159px;width:298px;height:20px;color:#333;font-size:14px;line-height:18px;padding-left:16px;white-space:nowrap">Local Handicrafts</div>
</div>
<div class="r" style="left:1903px;top:0px;width:17px;height:1080px;background:#f1f1f1;"></div>
<div class="r" style="left:1905px;top:17px;width:13px;height:605px;background:#c1c1c1;"></div>
<svg class="r" style="left:1908px;top:7px;" width="7" height="4" viewBox="0 0 7 4"><path d="M3.5 0L7 4H0z" fill="#a3a3a3"/></svg>
<div class="r" style="left:1899px;top:21px;width:4px;height:18px;background:#bfe3ff;filter:blur(1.5px);border-radius:2px;opacity:.7"></div>
<svg class="r" style="left:1907px;top:1069px;" width="8" height="5" viewBox="0 0 8 5"><path d="M0 0h8L4 5z" fill="#505050"/></svg>
</body></html>
